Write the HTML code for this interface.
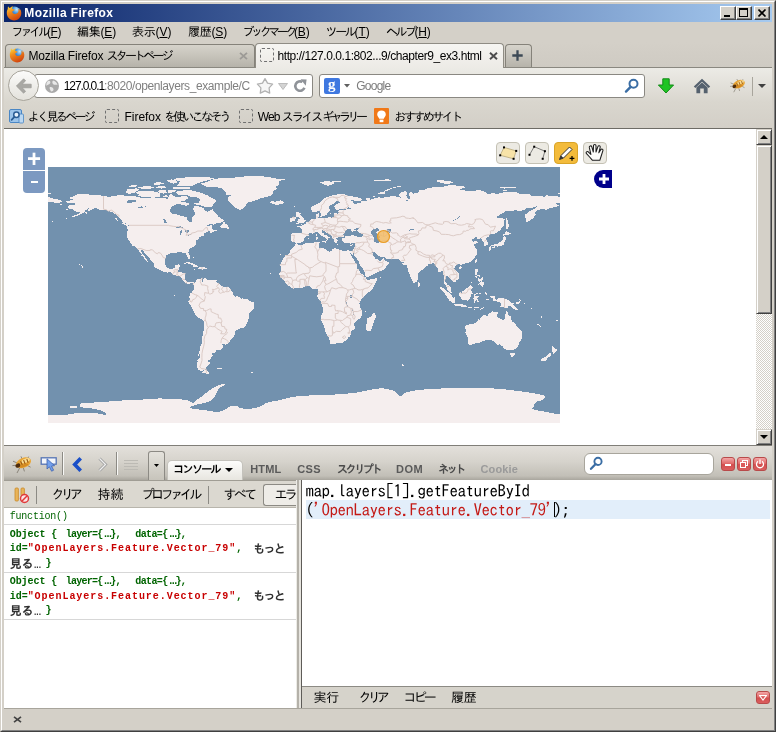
<!DOCTYPE html>
<html lang="ja">
<head>
<meta charset="utf-8">
<title>Mozilla Firefox</title>
<style>
html,body{margin:0;padding:0;}
body{width:776px;height:732px;overflow:hidden;background:#d4d0c8;position:relative;
  font-family:"Liberation Sans","IPAGothic",sans-serif;font-size:12px;color:#000;}
.abs,.t{position:absolute;}
.t{white-space:nowrap;line-height:14px;font-size:12px;}
body{will-change:transform;}
.jp{font-family:"Liberation Sans","IPAGothic",sans-serif;}
u{text-decoration:underline;}
/* window frame */
#frame{left:0;top:0;width:776px;height:732px;box-sizing:border-box;
  border-left:1px solid #d4d0c8;border-top:1px solid #d4d0c8;border-right:1px solid #404040;border-bottom:1px solid #404040;}
#frame2{left:1px;top:1px;width:774px;height:730px;box-sizing:border-box;
  border-left:1px solid #fff;border-top:1px solid #fff;border-right:1px solid #808080;border-bottom:1px solid #808080;}
#title{left:4px;top:4px;width:768px;height:18px;background:linear-gradient(to right,#0a246a 0%,#a6caf0 100%);}
#title .t{left:20.3px;top:2px;color:#fff;font-weight:bold;font-size:12px;}
.wbtn{position:absolute;top:2px;width:16px;height:14px;box-sizing:border-box;background:#d4d0c8;
  border-left:1px solid #fff;border-top:1px solid #fff;border-right:1px solid #404040;border-bottom:1px solid #404040;}
.wbtn:after{content:"";position:absolute;left:0;top:0;right:0;bottom:0;border-right:1px solid #808080;border-bottom:1px solid #808080;}
/* menu */
#menu{left:4px;top:22px;width:768px;height:20px;background:#d4d0c8;}
/* tab bar */
#tabbar{left:4px;top:42px;width:768px;height:26px;background:linear-gradient(#d4d0c8,#cfcbc3);border-bottom:1px solid #8a8880;box-sizing:border-box;}
.tab{position:absolute;box-sizing:border-box;border:1px solid #98958c;border-bottom:none;border-radius:4px 4px 0 0;}
/* nav */
#nav{left:4px;top:68px;width:768px;height:34px;background:linear-gradient(#ecebe6,#d9d6ce);}
#bm{left:4px;top:102px;width:768px;height:26px;background:linear-gradient(#d9d6ce,#d3cfc7);}
.field{position:absolute;box-sizing:border-box;background:#fff;border:1px solid #8a8882;border-radius:3px;}
.dash{position:absolute;width:14px;height:14px;box-sizing:border-box;border:1px dashed #707070;border-radius:2px;}
/* content */
#content{left:4px;top:128px;width:768px;height:317px;background:#fff;box-sizing:border-box;border-top:1px solid #6e6c66;}
.sbtn{position:absolute;width:16px;height:16px;box-sizing:border-box;background:#d4d0c8;
  border-left:1px solid #d4d0c8;border-top:1px solid #d4d0c8;border-right:1px solid #404040;border-bottom:1px solid #404040;box-shadow:inset 1px 1px 0 #fff,inset -1px -1px 0 #808080;}
.olbtn{position:absolute;top:142px;width:24px;height:22px;box-sizing:border-box;border:1px solid #c4c1b4;border-radius:4px;background:#eceae3;}
/* firebug */
#fbtool{left:4px;top:445px;width:768px;height:35px;box-sizing:border-box;border-top:1px solid #807e78;
  background:linear-gradient(#e3e0db 0%,#d6d3cc 45%,#c2bfb7 88%,#a9a69e 100%);}
#fbsub{left:4px;top:480px;width:292px;height:28px;background:#dbd8d0;box-sizing:border-box;border-top:1px solid #a09d94;border-bottom:1px solid #b8b5ac;}
#fblog{left:4px;top:508px;width:292px;height:200px;background:#fff;}
#split{left:296px;top:480px;width:6px;height:228px;background:linear-gradient(to right,#ecebe6 0 1px,#b4b1a9 1px 3px,#e6e4de 3px 5px,#5e5c58 5px 6px);}
#cmd{left:302px;top:480px;width:470px;height:206px;background:#fff;}
#cmdbar{left:302px;top:686px;width:470px;height:22px;background:#d6d3cb;box-sizing:border-box;border-top:1px solid #8c8a84;}
#addon{left:4px;top:708px;width:768px;height:20px;background:#d4d0c8;box-sizing:border-box;border-top:1px solid #a8a59c;}
.mono{font-family:"IPAGothic","Liberation Mono",monospace;}
.log{font-family:"Liberation Mono","IPAGothic",monospace;font-size:10px;font-weight:bold;color:#006400;letter-spacing:0.1px;}
.red{color:#c80000;}
.fbtab{font-family:"Liberation Sans","IPAGothic",sans-serif;font-weight:bold;font-size:11px;color:#5a5a5a;}
.rbtn{position:absolute;top:457px;width:14px;height:14px;box-sizing:border-box;border:1px solid #b84a4a;border-radius:3px;background:linear-gradient(#f3a6a6 0%,#e16c6c 45%,#d34e4e 55%,#da5e5e 100%);}
</style>
</head>
<body>
<svg width="0" height="0" style="position:absolute"><defs>
<radialGradient id="fg" cx="0.68" cy="0.25" r="0.75"><stop offset="0" stop-color="#c4e8fb"/><stop offset="0.45" stop-color="#3f92e0"/><stop offset="1" stop-color="#1b3b98"/></radialGradient>
<linearGradient id="ff" x1="0.1" y1="0" x2="0.6" y2="1"><stop offset="0" stop-color="#fdd93a"/><stop offset="0.4" stop-color="#f18d1d"/><stop offset="1" stop-color="#cf430e"/></linearGradient>
<symbol id="fx" viewBox="0 0 16 16"><circle cx="8.6" cy="7.4" r="5.9" fill="url(#fg)"/>
<path d="M2.2 1.2C2.6 2.4 3.2 2.8 4 3C5.2 1.8 6.6 1.4 7.6 1.6C6.4 2.2 6 3 6.2 3.8C7.2 4 8.2 4.2 8.6 5C8 5.8 7 5.8 6.4 6.4C6.2 7.4 7 8.4 8 8.8C9.6 9.4 11.2 8.8 12 7.6C12.8 6.2 12.6 4.6 12 3.4C13 4 13.6 5 13.8 5.8C13.8 4.6 13.6 3.8 13.2 3.2C14.8 4.6 15.6 6.8 15.2 9.2C14.6 12.8 11.8 15.4 8.2 15.4C4.2 15.4 .8 12.2 .8 8C.8 6.4 1.2 5 1.8 4C1.6 3 1.8 2 2.2 1.2Z" fill="url(#ff)"/></symbol>
</defs></svg>
<!-- ===== window frame ===== -->
<div class="abs" id="frame"></div>
<div class="abs" id="frame2"></div>

<!-- ===== title bar ===== -->
<div class="abs" id="title">
  <svg class="abs" style="left:2px;top:1px" width="16" height="16" viewBox="0 0 16 16"><use href="#fx"/></svg>
  <span class="t" style="letter-spacing:0.38px;">Mozilla Firefox</span>
  <div class="wbtn" style="left:716px"><div class="abs" style="left:3px;top:8px;width:6px;height:2px;background:#000"></div></div>
  <div class="wbtn" style="left:732px"><div class="abs" style="left:2px;top:1px;width:9px;height:9px;box-sizing:border-box;border:1px solid #000;border-top:2px solid #000"></div></div>
  <div class="wbtn" style="left:750px">
    <svg class="abs" style="left:3px;top:2px" width="9" height="8" viewBox="0 0 9 8"><path d="M0.5 0.5 L7.5 7.5 M7.5 0.5 L0.5 7.5" stroke="#000" stroke-width="1.6" fill="none"/></svg>
  </div>
</div>

<!-- ===== menu bar ===== -->
<div class="abs" id="menu">
  <span class="t jp" style="left:7.5px;top:3px"><span style="letter-spacing:-3.12px;">ファイル</span><span style="letter-spacing:-0.45px;">(<u>F</u>)</span></span>
  <span class="t jp" style="left:73px;top:3px"><span style="letter-spacing:-0.25px;">編集</span><span style="letter-spacing:-0.17px;">(<u>E</u>)</span></span>
  <span class="t jp" style="left:128px;top:3px"><span style="letter-spacing:-0.25px;">表示</span><span style="letter-spacing:-0.01px;">(<u>V</u>)</span></span>
  <span class="t jp" style="left:184px;top:3px"><span style="letter-spacing:-0.25px;">履歴</span><span style="letter-spacing:-0.17px;">(<u>S</u>)</span></span>
  <span class="t jp" style="left:238.5px;top:3px"><span style="letter-spacing:-3.42px;">ブックマーク</span><span style="letter-spacing:-0.17px;">(<u>B</u>)</span></span>
  <span class="t jp" style="left:321.5px;top:3px"><span style="letter-spacing:-2.33px;">ツール</span><span style="letter-spacing:-0.11px;">(<u>T</u>)</span></span>
  <span class="t jp" style="left:382px;top:3px"><span style="letter-spacing:-2.50px;">ヘルプ</span><span style="letter-spacing:-0.22px;">(<u>H</u>)</span></span>
</div>

<!-- ===== tab bar ===== -->
<div class="abs" id="tabbar">
  <div class="tab" style="left:1px;top:2px;width:250px;height:23px;background:linear-gradient(#d6d3cb,#b6b3aa);border-color:#85827a"></div>
  <div class="tab" style="left:251px;top:1px;width:249px;height:26px;background:linear-gradient(#f6f5f2,#eceae5);border-color:#8f8c84"></div>
  <div class="tab" style="left:501px;top:1.5px;width:27px;height:23.5px;background:linear-gradient(#d6d3cb,#b6b3aa);border-color:#85827a"></div>
  <svg class="abs" style="left:5px;top:5px" width="16" height="16" viewBox="0 0 16 16"><use href="#fx"/></svg>
  <span class="t jp" style="left:24.5px;top:7px"><span style="letter-spacing:-0.17px;">Mozilla Firefox </span><span style="letter-spacing:-2.79px;">スタートページ</span></span>
  <svg class="abs" style="left:235px;top:10px" width="9" height="8" viewBox="0 0 9 8"><path d="M1 0.8L8 7.2M8 0.8L1 7.2" stroke="#9c9a96" stroke-width="1.8" fill="none"/></svg>
  <div class="dash" style="left:256px;top:6px"></div>
  <span class="t jp" style="left:273.5px;top:7px;letter-spacing:-0.43px;">http://127.0.0.1:802...9/chapter9_ex3.html</span>
  <svg class="abs" style="left:485px;top:10px" width="9" height="8" viewBox="0 0 9 8"><path d="M1 0.8L8 7.2M8 0.8L1 7.2" stroke="#4c4c4c" stroke-width="1.9" fill="none"/></svg>
  <svg class="abs" style="left:508px;top:8px" width="11" height="11" viewBox="0 0 11 11"><path d="M5.5 0.3V10.7M0.3 5.5H10.7" stroke="#3c4956" stroke-width="2.3" fill="none"/></svg>
</div>

<!-- ===== nav bar ===== -->
<div class="abs" id="nav">
  <div class="field" style="left:30px;top:6px;width:279px;height:24px;"></div>
  <div class="abs" style="left:4px;top:2px;width:31px;height:31px;box-sizing:border-box;border:1px solid #a8a59c;border-radius:50%;background:linear-gradient(#fbfbfa,#e4e2dc);"></div>
  <svg class="abs" style="left:11px;top:10px" width="18" height="16" viewBox="0 0 18 16"><path d="M8.6 0.8 L1.4 8 L8.6 15.2 L10.6 13.2 L7.2 9.8 H16.2 V6.2 H7.2 L10.6 2.8 Z" fill="#a9a8a4" stroke="#9b9a95" stroke-width="0.7" stroke-linejoin="round"/></svg>
  <svg class="abs" style="left:40px;top:10px" width="16" height="16" viewBox="0 0 16 16"><circle cx="8" cy="8" r="7" fill="#a9a9a9"/><path d="M4 3 C6 2 7 4 6 5.5 C5 7 3 6.5 2.5 8 C2 6 2.5 4 4 3Z M9 2.5 C11 3 13 4.5 13.5 7 C12 6 11 7.5 9.5 6.5 C8 5.5 8 3.5 9 2.5Z M6 9 C8 8.5 10 10 9.5 12 C9 13.5 7 14 6.5 12.5 C6 11 5 10 6 9Z" fill="#e8e8e8"/></svg>
  <span class="t jp" style="left:59.7px;top:11px"><span style="letter-spacing:-1.08px;">127.0.0.1</span><span style="color:#808080;letter-spacing:-0.40px;">:8020/openlayers_example/C</span></span>
  <svg class="abs" style="left:252px;top:9px" width="18" height="18" viewBox="0 0 18 18"><path d="M9.0 1.6 L11.5 6.1 L16.6 7.1 L13.1 10.9 L13.7 16.1 L9.0 13.9 L4.3 16.1 L4.9 10.9 L1.4 7.1 L6.5 6.1 Z" fill="#f6f6f6" stroke="#b2b2b2" stroke-width="1.3" stroke-linejoin="round"/></svg>
  <svg class="abs" style="left:274px;top:15px" width="10" height="7" viewBox="0 0 10 7"><path d="M0.5 0.5 H9.5 L5 6.5 Z" fill="#d4d4d4" stroke="#b0b0b0" stroke-width="0.8"/></svg>
  <svg class="abs" style="left:289px;top:11px" width="14" height="14" viewBox="0 0 14 14"><path d="M11.4 8.8 A4.7 4.7 0 1 1 9.4 3" fill="none" stroke="#8f9399" stroke-width="2.6"/><path d="M7.6 0.2 L13.6 0.6 L12.8 6.8 Z" fill="#8f9399"/></svg>
  <div class="field" style="left:315px;top:6px;width:326px;height:24px;"></div>
  <div class="abs" style="left:320px;top:10px;width:16px;height:16px;background:#3f78e0;border-radius:2px;"></div>
  <span class="t" style="left:324px;top:9px;color:#fff;font-family:'Liberation Serif',serif;font-weight:bold;font-size:15px;line-height:15px">g</span>
  <svg class="abs" style="left:340px;top:16px" width="6" height="3.5" viewBox="0 0 7 4"><path d="M0 0H7L3.5 4Z" fill="#606060"/></svg>
  <span class="t jp" style="left:352.3px;top:11px;color:#7c7c7c;letter-spacing:-0.78px;">Google</span>
  <svg class="abs" style="left:620px;top:10px" width="16" height="16" viewBox="0 0 16 16"><circle cx="9.5" cy="5.8" r="4" fill="#fff" stroke="#3b6ea5" stroke-width="2"/><path d="M6.6 8.8 L2 13.6" stroke="#3b6ea5" stroke-width="2.4" stroke-linecap="round"/></svg>
  <svg class="abs" style="left:653px;top:10px" width="18" height="16" viewBox="0 0 18 16"><path d="M5.8 0.8 H12.2 V7 H16.6 L9 15 L1.4 7 H5.8 Z" fill="#1fc424" stroke="#138a17" stroke-width="1" stroke-linejoin="round"/></svg>
  <svg class="abs" style="left:689px;top:10px" width="18" height="16" viewBox="0 0 18 16"><path d="M9 0.8 L0.8 8.6 L2.4 10 L9 3.8 L15.6 10 L17.2 8.6 Z" fill="#55616e"/><path d="M3.4 9.6 L9 4.6 L14.6 9.6 V15.2 H10.8 V10.4 H7.2 V15.2 H3.4 Z" fill="#55616e"/></svg>
  <svg class="abs" style="left:724.6px;top:10.4px" width="19" height="15" viewBox="0 0 24 19">
  <path d="M2 6.2 L7.6 8.6 M1.4 10.6 L6 10.2 M6 18 L8.6 13 M13.4 16.4 L12.4 13 M19.6 12.2 L16.6 10.6 M10 1.4 L11.4 4.6 M17.6 1.6 L16.4 4.4" stroke="#7a7468" stroke-width="0.8" fill="none"/>
  <ellipse cx="12.5" cy="7.8" rx="7.9" ry="4.9" fill="#e9a636" transform="rotate(-22 12.5 7.8)"/>
  <ellipse cx="14.6" cy="5.6" rx="4.4" ry="2" fill="#f8dc92" transform="rotate(-22 14.6 5.6)"/>
  <ellipse cx="6.9" cy="10.6" rx="2.6" ry="2.1" fill="#4e2c0c" transform="rotate(-22 6.9 10.6)"/>
  <path d="M9.6 6.2 L11.6 10.8 M12.6 5 L14.4 9.6 M15.8 4 L17.2 7.8" stroke="#9a5a16" stroke-width="1.1" fill="none"/>
  <ellipse cx="13" cy="10.6" rx="4.6" ry="1.3" fill="#d48a22" transform="rotate(-22 13 10.6)"/>
</svg>
  <div class="abs" style="left:748px;top:9px;width:1px;height:19px;background:#a8a59c"></div>
  <svg class="abs" style="left:754px;top:16px" width="8" height="4" viewBox="0 0 8 4"><path d="M0 0H8L4 4Z" fill="#404040"/></svg>
</div>

<!-- ===== bookmarks bar ===== -->
<div class="abs" id="bm">
  <svg class="abs" style="left:5px;top:7px" width="15" height="15" viewBox="0 0 15 15"><rect x="0.5" y="0.5" width="12" height="13" rx="1.5" fill="#9cc4ea" stroke="#4a86c4"/><rect x="10" y="5" width="4.5" height="9" rx="1" fill="#bcd8f2" stroke="#4a86c4" stroke-width="0.8"/><circle cx="7.4" cy="5.8" r="2.7" fill="#e8f3fc" stroke="#2b5d94" stroke-width="1.5"/><path d="M5.4 7.8 L2.6 10.8" stroke="#2b5d94" stroke-width="1.8" stroke-linecap="round"/></svg>
  <span class="t jp" style="left:23.7px;top:8px;letter-spacing:-2.64px;">よく見るページ</span>
  <div class="dash" style="left:100.5px;top:7px"></div>
  <span class="t jp" style="left:120.6px;top:8px"><span style="letter-spacing:-0.06px;">Firefox </span><span style="letter-spacing:-2.79px;">を使いこなそう</span></span>
  <div class="dash" style="left:234.5px;top:7px"></div>
  <span class="t jp" style="left:253.8px;top:8px"><span style="letter-spacing:-0.95px;">Web </span><span style="letter-spacing:-2.17px;">スライス </span><span style="letter-spacing:-3.60px;">ギャラリー</span></span>
  <div class="abs" style="left:369.5px;top:6px;width:15px;height:16px;background:#f07818;border-radius:1px;"></div>
  <svg class="abs" style="left:371.5px;top:8px" width="11" height="13" viewBox="0 0 11 13"><path d="M5.5 0.5 C8 0.5 9.8 2.2 9.8 4.4 C9.8 6.2 8.2 7 7.8 8.8 H3.2 C2.8 7 1.2 6.2 1.2 4.4 C1.2 2.2 3 0.5 5.5 0.5Z" fill="#fff"/><rect x="3.6" y="9.6" width="3.8" height="2.6" fill="#fff"/></svg>
  <span class="t jp" style="left:390.2px;top:8px;letter-spacing:-2.50px;">おすすめサイト</span>
</div>

<!-- ===== content ===== -->
<div class="abs" id="content"></div>
<!-- scrollbar -->
<div class="abs" style="left:756px;top:129px;width:16px;height:316px;background:#eae8e3;background-image:repeating-conic-gradient(#d4d0c8 0% 25%,#fff 0% 50%);background-size:2px 2px;"></div>
<div class="sbtn" style="left:756px;top:129px"><svg class="abs" style="left:3px;top:5px" width="8" height="4" viewBox="0 0 8 4"><path d="M0 4H8L4 0Z" fill="#000"/></svg></div>
<div class="sbtn" style="left:756px;top:145px;height:169px"></div>
<div class="sbtn" style="left:756px;top:429px"><svg class="abs" style="left:3px;top:5px" width="8" height="4" viewBox="0 0 8 4"><path d="M0 0H8L4 4Z" fill="#000"/></svg></div>

<!-- zoom control -->
<div class="abs" style="left:23px;top:148px;width:22px;height:22px;background:#7c99c1;border-radius:4px 4px 0 0;"></div>
<div class="abs" style="left:23px;top:171px;width:22px;height:22px;background:#7c99c1;border-radius:0 0 4px 4px;"></div>
<span class="t" style="left:27px;top:146.5px;color:#fff;font-weight:bold;font-size:24px;line-height:24px;font-family:'Liberation Sans',sans-serif">+</span>
<div class="abs" style="left:31px;top:181px;width:7px;height:2px;background:#fff"></div>

<!-- map -->
<svg class="abs" style="left:48px;top:167px" width="512" height="256" viewBox="0 0 512 256">
<rect width="512" height="256" fill="#7291ae"/>
<g shape-rendering="crispEdges">
<path fill="#f5eeee" d="M17.1 34.7L22.8 33.4L25.6 32.7L19.9 30.9L24.2 29.9L28.4 27.7L33.4 26.6L39.8 27.3L45.5 28L52.6 28.4L55.5 29L61.2 29.9L64 29.4L69.7 28.4L74 28L78.2 29.2L83.9 28.7L89.6 29.9L93.9 30.9L99.6 31.4L102.4 31L105.2 30.2L110.9 31.6L116.6 30.6L119.5 32.3L120.2 30.2L122.3 26.3L120.9 25.6L125.2 28.4L128 30.3L130.8 29.9L134.4 29.2L139.4 29.2L140.1 31.3L136.5 33.7L132.3 34.8L132.3 37L128 37.3L124.4 39.1L122.3 42L121.6 44.4L124.4 46.9L129.4 47.6L135.1 49.4L139 49.8L139.4 52.6L141.5 55L143.6 54.8L143.6 50.5L146.5 48.4L147.2 45.5L145.1 42.7L145.8 39.1L150.8 39.3L155 40.8L156.4 42.7L157.2 43.7L160 44.7L162.1 43.7L163.6 42.7L164.3 42.1L167.8 46.2L170.7 49.8L174.9 52.6L176.4 54L172.1 56.2L166.4 56.6L161.4 56.9L157.9 59.7L155 61.4L159.3 59L163.6 58.3L164.3 59.7L163.6 61.9L165 62.6L169.2 63.3L170.7 61.9L169.2 63.6L165 65L162.1 66.1L162.1 64.7L163.6 63.3L160.7 64L157.9 65.4L155.7 66.4L155.4 68.3L156.4 68.7L153.6 69.4L150.8 70.3L150.5 71.8L148.6 73.2L147.9 75.4L148.3 77.5L145.8 79.4L142.9 81.1L140.8 83.2L140.4 85.3L141.8 88.9L141.9 91.7L140.8 92.2L139.4 90.3L138.4 88.2L137.2 85.6L135.1 85.8L132.3 84.8L129.4 84.9L128.7 86.5L126.6 86.3L123 85.8L120.9 86.8L118 88.5L117.6 91L117 93.9L116.9 96.3L118.8 100.3L120.9 101.5L122.3 102L125.2 101.4L127 100.3L127.6 98.1L130.8 97.4L132.3 97.7L131.6 100.3L130.8 101.7L130.1 103.8L130.1 105.2L133.7 105.5L136.5 105.7L137.5 106.7L137.2 109.5L137 112.4L138 113.8L139.4 115.2L140.8 115.5L142.6 114.5L145.1 114.8L146.1 115.9L145.4 117.6L144.4 115.9L142.9 115.5L141.8 117.6L140.1 117L138 116.2L137 115.2L135.1 113.8L134 113.1L133.7 111.6L131.6 109.5L130.1 109.2L128 108.5L125.9 108.1L123.7 106L121.6 105L119.5 105.7L116.6 105L113.8 103.8L110.9 102.4L108.1 101L106 99.3L106.2 97.1L105.2 95.3L102.4 92.4L100.3 90.3L98.8 88.5L96.7 86.8L95.3 83.6L92.9 82.9L92.9 84.6L94.6 87L96.7 89.6L98.1 91.7L99.6 93.9L100.3 95.3L98.8 94.6L96.7 92.4L95.3 89.9L93.2 88.5L93.9 87.5L91.7 85.3L90.3 83.2L89.3 81.6L87.5 79.6L84.6 78.9L82.8 76.1L81.8 74.2L79.9 71.8L79.2 70.4L79.4 66.8L79.6 62.6L78.6 59.3L81.1 59L81.8 60.4L81.1 58.3L78.2 56.9L74.7 55.5L74 53.3L71.1 50.5L69.7 49.1L66.8 46.9L64 44.8L61.2 44.4L57.6 43L54 42.7L51.2 42.7L48.4 41.2L45.5 41.5L42.7 43.4L39.8 44.1L40.5 41.5L42.7 41L39.8 41.5L37 43.7L37 45.1L34.1 46.5L30.6 48.4L27 49.4L24.2 50.1L22 50.5L25.6 48.6L28.4 47.6L31.3 46.2L32 44.5L28.4 44.5L25.6 44.1L25.6 42.7L22 42L19.9 40.2L21.3 38.4L24.2 38.1L27 37.4L27 36L24.2 36.3L19.9 36.3ZM152.2 16.8L159.3 14.9L163.6 12.8L170.7 11.4L184.9 10.7L199.1 9.2L213.3 9.2L224.7 10.7L230.4 12.1L238.9 12.1L230.4 14.2L231.8 17.1L227.6 19.9L229 22L224.7 24.2L224.7 27L223.3 28.4L219 29.9L213.3 31L209.1 32.7L204.8 34.4L199.1 35.6L197.7 38.4L194.8 42L192 42.7L187.7 41.2L184.9 38.4L182 35.6L179.9 32.7L180.6 29.9L183.5 28.4L178.5 27.7L177.8 24.9L173.5 21.3L167.8 19.9L160.7 19.9L156.4 19.2L155 17.8ZM163.6 40.4L165 37.7L168.5 33.4L165 31.3L159.3 28.4L155 26.3L147.9 24.5L142.2 23.2L135.1 23.5L129.4 23.5L128 25.6L130.1 27.7L135.1 28.4L139.4 28.4L143.6 29.9L147.9 29.9L150.8 31.3L152.2 33L150.8 35.6L145.1 35.8L146.5 37.3L152.2 38.1L156.4 39.5L160.7 40.1ZM112.4 29.9L106.7 30.6L99.6 30.4L92.4 29.4L89.6 28.4L92.4 27L87.5 26.3L88.2 24.9L92.4 23.8L99.6 24.2L103.8 23.8L106.7 24.9L110.9 25.6L112.4 27.7ZM77.5 25.6L81.1 26.7L85.3 26.3L88.9 24.2L91.7 22.8L88.2 21.3L83.9 22L79.6 22.3ZM142.2 19.5L147.9 17.1L153.6 14.9L162.1 12.8L167.8 11L156.4 10L142.2 10L128 11.4L125.2 12.8L132.3 14.2L130.8 16.6L128 19.2L135.1 19.2ZM119.5 13.5L123.7 12.4L128 13.5L129.4 15.6L125.2 16.6L119.5 14.9ZM142.2 21.3L142.2 20.3L139.4 19.9L128 19.5L125.2 20.6L125.2 21.8L135.1 22L142.2 21.8ZM89.6 20.9L93.9 21.6L101 21.6L106 21.3L105.2 19.9L101 19.1L95.3 19.5L89.6 19.9ZM108.1 21L113.8 21.6L118 20.6L116.6 19.2L110.9 19.2L108.1 19.9ZM110.9 25.6L115.2 26.6L118.8 25.6L118 23.5L113.8 22.8L110.2 23.9ZM120.2 25.6L123.7 25.6L127.3 24.6L128 22.8L122.3 22.5L119.5 23.5ZM132.3 35.1L136.5 34.8L140.8 36.6L141.5 37.7L138 38.7L134.4 38L132.3 37ZM114.5 29.9L118 30.6L120.2 29.6L118.8 28.4L115.2 28.7ZM81.1 19.6L85.3 20.2L90.3 19.1L88.2 17.8L83.9 18.2ZM106.7 17.8L113.8 17.4L116.6 16.4L112.4 15.2L106.7 15.6L105.2 16.8ZM171.7 60.2L176.4 61.4L180.6 61.6L181 60.3L179.9 59L179.2 57.6L176.6 56.9L177.1 54.8L175.2 55.5L174.2 57.6L172.4 59ZM73.5 55.9L76.8 58L80.4 59.3L80.4 58.3L78.2 56.6L75.4 55.6ZM66.8 51.2L68.7 51.2L69.7 53.6L68 52.9ZM36.3 46.2L39.1 46.6L39.4 45.5L37.7 45.2ZM135.1 97L138 95.3L140.8 95L143.6 96L146.5 97.4L149.3 98.6L150.5 99.3L148.6 99.7L145.5 99.8L145.1 98.6L142.2 97.1L139.4 96.3L137.2 96.6ZM150 101.8L152.2 99.7L154 99.8L156.4 100L158.7 101.5L157.9 102L155.7 102.1L154 102.8L152.9 102.1ZM144.6 101.8L147.5 102.1L147.2 102.7L144.8 102.4ZM160.4 101.7L162.7 101.8L162.4 102.5L160.4 102.4ZM144.6 89.9L146.2 90.3L146.1 91.2L144.8 90.5ZM168.1 112.6L169.4 112.6L169.2 113.6L168.1 113.6ZM146.1 115.9L147.9 114.8L148.6 112.9L149.6 112.4L152.2 111.9L154 110.4L154.6 111.4L153.6 112.4L154.2 114.5L155 112.6L156.4 111.6L156.7 110.6L158.6 111.9L159.3 112.9L162.1 112.9L164.3 113.5L166.4 112.8L167.8 112.9L168.1 114.1L169.5 115.6L171 116.3L172.8 118.2L174.6 119.5L177.1 119.6L179.2 119.8L181.3 120.9L182.8 121.7L183.5 123.7L184.9 125.6L184.6 127.6L186.3 128.3L187.3 129.7L189.2 129L192 130.1L193 131.6L194.8 131.4L197 132.1L199.1 132L201.2 133.3L203.1 134.8L205.5 135.4L206.2 137.2L206.5 139.4L205.8 141.5L204.1 143.1L202.7 144.8L201.2 146.5L200.5 148.6L200.5 151.5L200.2 153.6L199.1 156.2L198 158.6L196.6 160.4L194.1 160.7L192 161.7L189.9 162.4L187.7 164L186.9 166.1L186.7 168.2L184.9 170.4L182.8 172.8L181.3 174.9L179.9 176.6L177.8 177.6L174.9 177.1L172.9 176.4L174.6 178.2L175.2 180.1L173.9 182L171.4 183.2L167.8 183.5L167.4 185.6L163.8 186L163.6 187.7L165.3 188.4L163.6 189.6L162.8 192L160.3 193.1L160 194.6L162.1 195.6L161.4 197L159.3 199.1L157.9 200.5L158.7 202.4L157.2 202.4L155 203.4L155 204.5L152.9 204.1L150.8 203.1L149.3 201.2L148.9 199.1L148.6 196.3L150 194.6L148.6 194.1L150 192L151.5 190.6L152.2 187.7L151 186.3L151.5 184.2L151.5 181.3L152.6 179.2L153.6 176.4L154.3 173.5L154.3 170.7L154.6 167.8L155.4 165L155.7 162.1L156.2 159.3L156.2 156.4L156 154L154.3 152.6L152.2 151.5L149.3 150L147.5 147.9L147.2 146.5L146.1 145.1L144.8 142.2L143.6 139.8L142.5 138L140.8 136.5L140.4 134.4L141.8 132.8L142.2 131.6L140.8 131.1L141.1 129.4L142.2 128L142.2 126.6L143.9 125.7L144.4 124.3L145.8 123L145.8 120.9L146.1 118.8L145.4 117.6ZM155.7 203L158.4 203L159.3 204.1L161.4 205.5L163.3 205.9L161.4 206.5L157.9 206.6L154.3 205.5L153.6 204.5L155.3 204.5ZM169.2 201L172.1 201L173.8 201.5L172.1 202.4L169.2 202ZM247.6 77.1L251.7 77.8L254.6 78.1L257.4 76.2L260.3 75.5L263.1 75.8L267.4 75.4L270.2 75L271.6 75.5L270.9 77.5L271.4 78.9L270.5 79.9L271.9 80.8L274.5 81.2L277.6 82.1L278.8 83.5L281.6 84.6L284.2 84.3L284.4 82.5L286.6 81.2L288.7 81.6L291.6 82.8L294.4 83.5L297.2 84.1L300.1 83.2L301.9 83.6L303.6 83.8L304.8 83.5L305.6 86L304.9 88.2L303.8 87.9L302.4 85.5L301.9 85.9L303.6 88.9L305.1 91.7L306.5 93.9L306.8 95.6L308.6 97.4L309 99.6L309.3 101.7L310.9 102.4L312.2 106L314.3 107.1L316.4 109.5L317.6 110.2L317.6 111.6L319.3 113.2L322.1 112.6L325 111.9L328.8 111.1L328.8 113.1L327.5 115.9L326.4 118L325 120.9L322.8 123.7L320 125.9L317.2 128L315 130.6L313.6 131.8L312.2 134.4L311.3 136.5L312.2 138.7L312.2 140.8L313.6 142.9L313.6 145.8L313.9 148.6L312.9 150.8L310 152.6L307.9 154.7L305.8 156.4L306.5 159.3L306.5 162.1L302.9 164.3L302.8 166.4L302.2 169L300.1 170.7L298.7 172.8L296.2 174.6L294.4 175.9L292.3 176.4L289.4 176.4L287.3 176.6L284.4 177.5L282.3 176.6L282 174.6L281.3 172.1L279.9 169.2L278.5 167.1L277.3 164.3L276.6 161.4L276.3 159.3L274.9 156.9L273.4 154.3L272.8 152.2L273.1 149.3L274.5 146.5L275.5 143.6L274.9 141.2L274.2 138.7L273.4 136.5L273.4 135.1L272.4 133.7L270.2 131.6L269.1 129.4L269.5 127.6L269.8 125.2L269.9 123L268.8 121.6L266.7 121.7L264.8 121.9L263.1 120.2L261 118.9L258.1 119.3L256 120L253.2 121.3L251 120.7L248.2 120.7L245.3 121.7L243.2 120.6L240.8 119L239.2 117.8L237.5 115.9L236.8 114.2L235.1 112.8L234.2 111.6L232.2 110.2L232.1 108.8L231.1 107.1L232.4 105.2L232.8 103.1L233.1 100.6L231.8 98.1L232.8 96L234 93.9L235.4 91L237.5 88.5L240.4 87.2L242.1 85.6L242.3 83.9L243.2 81.8L245.3 80.2L246.8 78.9ZM326.1 145.1L327.5 147.9L327.8 150.5L326.4 152.9L325.4 156.4L324 160.7L322.8 163.6L320.7 164.3L318.6 163.6L317.6 160.7L317.9 158.6L319 156.4L318.6 153.6L319.3 151.2L321.4 150.3L323.6 148.9L325 146.5ZM331.8 109.9L333.5 110.1L333.2 110.5L331.9 110.5ZM232 87.6L233.1 87.3L232.5 88.2ZM235.4 87.2L236.4 87L235.8 88ZM317.4 144.2L317.9 144.2L317.9 144.9L317.4 144.9ZM334.5 157.7L335.4 157.7L335.4 158.4L334.5 158.4ZM337.5 156.4L338.2 156.4L338.2 157.2L337.5 157.2ZM243.2 66.8L244.6 65.8L248.2 66L251 66.3L253.4 66.3L254.3 64.4L254.3 62.6L252.9 60.9L249.6 59.9L249.3 59L251.7 58.6L253.7 58.7L253.4 57.3L254.3 57.7L256.3 57.6L258.1 56.6L258.4 55.5L261 54.9L262.1 53.8L262.8 52.6L264.5 52.1L266.2 51.9L268.1 51.6L268.5 50.8L268.2 49.1L267.7 47.2L269.5 46.6L270.9 45.9L270.8 47.6L271.4 48.4L270.2 49.4L269.8 50.1L271.4 51.2L273.1 50.9L275.2 50.6L276.3 51.3L278.8 50.8L281.6 50.1L283.7 50.6L284.4 49.9L285.9 49.4L285.9 47.2L286.6 46.2L288 45.9L290.1 46.8L290.7 45.1L289.4 43.8L292.3 43.2L295.8 43.4L298.7 42.7L296.5 41.8L293 42.1L288.7 42.8L287.3 42L286.3 40.1L286.6 38.4L288.7 37L291.6 35.6L290.4 34.4L287.7 34.4L286.3 36.3L283 38L280.9 39.4L280.5 41.2L280.6 42.2L282.7 42.7L281.6 44.1L279.5 45.8L278.8 47.9L276.6 48.4L276.2 49.2L274.5 49.2L273.9 48.1L272.1 45.5L271.6 44.1L270.9 43.4L269.5 44.1L267.4 45.4L265.2 45.4L263.8 44.1L263.1 42L263.1 39.8L265.2 38.7L268.1 37.7L270.9 36.3L273.1 34.8L274.5 32.7L277.3 30.9L280.9 29.4L284.4 28.3L288.7 27.6L292.6 26.9L295.8 27.2L300.1 28L298.7 28.9L302.9 29.3L307.2 29.7L312.9 31.6L314.3 33L312.2 34L307.2 33.7L303.6 33.1L302.2 33.7L305.5 34.8L305.4 36.3L308.6 37L309.3 35.8L312.9 36L313.3 34.4L315.7 33.6L318.6 33.7L317.9 31.6L319 30.6L322.1 31.3L321.7 32.9L324.3 31.9L327.1 31L331.4 30.2L333.5 30.9L338.5 30.2L341.3 30.4L342.8 29L347 29.4L349.9 29.9L353.4 30.9L351.3 29.2L351 27L353.4 24.9L357.7 24.2L359.5 25.9L358.4 28.4L359.4 30.6L361 32.3L357.7 33.7L359.8 33.8L362 31.6L362.4 29.9L360.7 28L361.7 25.6L363.4 25.2L365.5 26.7L368.4 25.9L370.5 25.2L370.8 23.5L375.5 23L379.7 21.9L379 20.9L384 20.5L389 19.9L394 19.9L398.2 19.2L401.1 17.8L404.3 17.5L406.8 18.1L409.6 18.9L415.3 19.2L417.4 20.2L412.4 22L412.4 23L417.4 23.5L424.5 23.9L430.9 23.2L433.8 23.6L436.6 24.6L440.2 27L443.7 26.3L446.6 26.5L450.8 26.5L454.4 26.3L455.1 24.9L459.4 24.6L463.6 25.2L468.6 25.3L470.8 26.5L473.6 27.2L478.6 27L482.8 27.6L483.6 28.9L487.8 28.9L493.5 29L496.4 30.2L498.5 28.4L502 28.7L506.3 28.7L509.9 29.4L512 30L512 35.4L510.6 35.8L508.4 36L508.4 36.7L510.6 38.4L510.3 39.3L506.3 40.1L502 41.2L498.5 42.7L493.5 42.2L490 42.8L488.2 44.1L487.1 45.8L488.1 47.6L486.4 49.1L486.1 50.3L483.6 52.3L481.4 53.8L478.9 55.5L477.9 53.3L477.3 50.5L477.3 47.6L479.3 45.8L482.1 44.1L485.7 42.1L488.5 40.1L489.2 39.1L485 40.2L483.3 41.5L479.3 40.5L475.7 43.2L472.2 44.1L467.9 43.4L462.9 43.7L458.7 43.8L455.1 45.9L451.6 47.9L448.4 50.1L451.6 51.3L454.4 50.9L456.8 52.3L455.8 54.8L455.5 56.9L455.7 59.3L453.7 61.2L452.3 63.1L449.4 64.9L447 66.6L444 66.6L442.3 67.4L440.9 68.3L440.5 69.8L438.5 71.1L437.3 71.8L438.8 73.2L440 75.4L440 77.4L438.8 78.2L436.6 78.8L435.6 78.2L436.1 76.1L435.5 74.5L433.8 74.1L434.2 72.1L432.8 71.3L430.2 71.8L428.5 72.7L429.2 70.3L428.1 70L426 71.4L423.8 72.2L423.4 73.4L425.2 74.8L427.8 74.2L430.2 75L429.5 75.7L427.1 76.8L425.7 78.2L427.1 79.6L427.8 81.5L429.2 83.1L429.4 84.2L427.4 84.9L429.2 85.5L428.9 87.8L427.4 89.3L426.1 91.4L424.7 93L422.8 94.4L421 95.4L418.6 96.1L417.1 96.4L415 97.3L413.2 97.7L412.9 99.1L412.2 97.6L410.3 97.1L408.2 98.1L406.8 99.8L406.3 101.3L407.6 103.1L409.3 104.8L410.7 106.4L411.4 108.8L411.3 111.2L409.6 112.5L408.2 113.2L407.6 114.5L405.3 115.6L405 113.8L403.2 112.9L401.8 110.9L400.1 109.9L399.5 108.8L398.2 108.9L398.1 110.9L397.2 113.1L397.2 114.8L398.6 116.2L399.1 117.8L400.8 118.5L402.5 120L403.2 121.6L403.2 124L404.2 125.9L403.2 126.2L401.8 125.2L400.1 123.9L398.8 122L398.6 119.8L397.8 118.3L396.1 116.3L395.8 114.5L396.4 112.4L396.2 110.2L395.7 108.1L395 106L395 104.5L393.7 103.8L391.8 105.5L390.1 105.2L390.4 103.1L389.7 101L388 99.3L386.8 97.3L386.1 95.9L384.7 96.1L383.3 97L381.4 97L379.7 97.7L379.4 99.1L377.3 100L375.5 101.7L373 103.8L371.2 105L370.1 106L369.9 108.1L370.2 109.8L369.5 111.6L369.5 113.4L368.4 114.8L367.2 115.3L366.2 116.5L365.2 115.5L364.4 113.8L363.4 111.4L362.4 109.5L361.8 107.1L360.7 105.2L359.8 102.7L359.5 100.6L359.4 98.1L358.8 97.4L357 98.4L355.6 98.1L354.1 96.3L356 95.4L353.8 94.9L352 93.9L351.3 92.7L350.6 91.9L347.7 92.2L344.9 92.2L343.5 92.3L340.6 91.9L337.8 91.4L336.8 89.6L334.2 90L332.1 89.9L330 88.5L328.5 87L327.1 85L325.5 84.9L324.3 85.6L325 87.5L325.7 88.9L327.1 90.2L327.4 91.6L328.2 92.7L329 91L329.4 92.4L330.7 93.6L332.8 93.7L334.9 92L336.1 90.7L336.4 93.2L337.8 94.2L339.6 94.6L341 96L339.9 98.1L338.5 99L338.1 101L336.4 102.4L334.5 103.1L332.8 103.8L330 105.2L327.1 106.7L324.3 108.1L320.7 109.5L318.6 110.1L317.6 109.1L316.9 107L316.7 104.8L315.4 102.7L314.3 100.6L312.5 98.8L311.5 96.7L310.5 94.3L309 92.4L307.9 90.3L306.2 88.2L305.6 86L304.8 83.5L305.8 81.8L306.5 79.6L307.2 77.1L307.3 75.9L305.2 75.7L302.6 76.7L300.1 75.7L298 76.4L295.8 75.8L294.8 74.7L293.7 73.2L294.4 71.8L293.3 71.1L295.1 70.5L297.2 70.5L297.4 69.4L300.4 69.5L303.4 68.3L306.1 68.3L307.9 69.3L310.8 69.7L313.6 69.7L315.2 68.8L315 67.6L312.6 66.1L310.3 64.9L309.2 63.6L310.3 62.6L311.8 60.9L309.3 61.2L306.2 62L305.8 63L307.9 63.6L306.5 64.1L304.1 64.9L302.4 63.4L303.6 62.4L301.2 61.7L299.8 61.9L298.4 63.3L297 64.6L296.7 66.1L295.4 67.4L296 68.8L297.2 69.4L295.1 69.7L294.1 70.4L293 69.8L290.8 69.8L289.8 70.7L288.6 70.4L288.1 71.8L289 72.5L290.1 73.7L289 74.1L288.7 75.8L288 76.1L286.9 75.5L286.2 74.2L286.3 73.4L284.9 71.8L283.6 70.4L283.7 68.7L282.3 67.6L280.2 66.6L278 65.4L277 63.7L275.6 64.1L275.3 63.1L273.6 63.4L273.5 65L275.2 66L276.2 67.6L278.8 68.4L278.8 69.1L281.6 70.3L282.3 71L280.5 70.5L279.6 71.5L280.3 72.5L279 74L278.3 74L278.8 72.5L277.8 71.1L276.3 70.1L274.5 69.3L272.6 68L270.9 67L270.5 65.6L268.5 64.9L266.7 65.7L265.2 66.7L263.1 66.3L261.7 66.1L260.4 66.8L260.6 68.6L258.8 69.3L257.1 69.7L256 71.4L255.6 72.1L256.3 73L255 74.2L253.4 75.4L252.7 75.7L249.6 75.8L248.3 76.7L247 75.8L246 75.1L243.5 75.4L243.5 73.5L242.5 72.8L243.2 71.1L243.6 69L242.8 66.8ZM247.9 56.7L251 56.5L254.6 55.9L257.8 55.2L257.1 54.6L258.4 53L256.4 52.6L255.9 51.2L254.2 49.8L253.2 48.5L251.4 48.4L253.2 46.2L251 45.9L251.7 44.7L248.9 44.7L247.5 46.2L248.2 47.6L247.5 48.8L248.9 49.8L251 49.9L251.7 51.2L251.7 52.2L249.6 52.3L249.9 53.6L248.6 54.3L251 54.9L249.9 55.5ZM241.8 54.5L244.3 54.5L247.2 53.8L247.5 52.1L248 50.5L246.8 49.5L244.3 49.6L243.9 50.6L241.8 50.9L242.5 52.2L241.8 53.6ZM221.9 34.8L224.7 33.6L226.8 34.7L230.4 33.8L233.2 33.4L235.4 34.4L236.5 35.6L234.7 36.6L230.4 37.7L226.8 37.5L224 37L224.7 35.8L221.9 35.7ZM271.6 14.9L275.9 14.5L280.2 14.2L284.4 14.8L287.3 16.2L283 17.8L280.2 18.9L277.3 18.2L275.2 17.1L272.4 16.1ZM282.3 13.9L288.7 13.5L294.4 14.1L290.1 15.1L284.4 14.6ZM329.2 27L332.1 27.3L335.6 27.4L337.8 26.3L335.6 24.2L339.2 22.3L344.2 20.6L349.9 19.2L353.4 18.6L352.7 19.5L345.6 21L341.3 22.8L337.1 24.5L333.5 25.2L330.7 25.9ZM322.8 13.9L330 13.1L338.5 12.4L347 12.8L341.3 13.8L332.8 14.2L327.1 14.4ZM391.1 15.4L396.8 16.8L403.9 16.4L405.3 14.9L398.2 13.9L392.5 12.8L386.8 13.9ZM450.8 20.9L456.5 21.6L462.2 21L469.3 21.3L466.5 19.9L459.4 19.6L453.7 19.8ZM455.1 23.6L459.4 23.9L458 22.9L455.1 22.9ZM509.9 26.9L512 27.2L512 26.3L510.6 26.3ZM0 27.2L2.8 27L3.3 26.5L0 26.3ZM0 30L2.8 30.9L7.1 32L11.4 32.7L14.2 34.1L11.4 35.8L10 36.6L6.4 35.8L4.3 34.8L2.1 34.7L0 35.4ZM458 50.8L459.4 51.9L459.8 54.8L460.5 56.9L461.5 58.3L459.4 61.2L459.8 62.2L458 62.6L458 59.7L458 56.9L457.5 54L457.7 51.9ZM455.5 69L457.2 67.6L459.8 68.3L462.9 66.4L461.2 65.4L459.1 64.4L457.7 63.4L457.4 65.4L457 66.6L455.5 66.8L455 67.8ZM442.2 79.6L444.4 79.4L446.6 78.8L448.3 78.9L449.1 80.4L450.6 79.2L453 78.8L454.8 78.2L456.4 77.2L456.5 75.4L457.5 73.2L458 71.5L457.1 69.1L455.4 69.7L455.1 71.4L454.4 73.2L453 75L451.3 74.8L450.6 75.7L449.4 76.8L448.7 77.4L445.9 77.5L444.4 77.8L442.7 78.9ZM440.5 80.6L442.3 79.8L443.6 80.8L443 82.5L441.9 83.9L441.2 83.5L441.5 81.8L440.5 81.4ZM444.2 80.4L446.6 79.2L447.6 79.9L446.9 80.6L445.2 81.4L444.4 81.1ZM428.1 92.2L429.5 92.4L428.8 94.6L427.8 96.7L426.8 95.3L427.1 93.4ZM410.6 100.6L412.4 99.4L413.9 100L413 101.5L411.7 102.1L410.6 101.5ZM369.5 114.2L370.5 114.8L372.3 117.3L372.1 118.9L370.5 119.6L369.6 118.8L369.5 116.6ZM427.2 101.7L429.8 101.7L429.9 103.8L429.1 105.5L429.5 107.8L432.4 108.4L432.4 110.1L430.9 109.5L429.5 108.5L427.8 108.4L427.1 107L426.5 104.8L427.2 103.1ZM429.5 118L431.6 115.9L433.8 114.1L435.6 115.2L435.9 117.6L435.2 119L434.3 119.9L432.8 119L432.4 117.5L430.9 117.3L429.7 118.2ZM429.5 111.2L431.2 111.5L432.8 111.6L434.6 110.4L434.8 112.4L433.8 113.5L432.4 113.8L431.2 114.8L430.1 114.1L430.8 112.6L429.5 113.1ZM422.7 116.1L423.8 114.9L426 112.6L426.2 111.8L425.7 112.9L424.2 114.9L423 116.2ZM427.1 108.8L428.8 109.1L428.5 110.5L427.8 110.2ZM411 125.9L412 125.2L413.9 125.7L414.6 124.2L416.7 123.4L418.1 121.6L420.3 120.5L422 118.2L423.4 119L425.2 120.6L423.8 121.9L423.1 123.3L423.8 124.9L425.2 126.6L423.5 127L423.1 129.1L421.7 130.4L421.4 132.7L420.7 133.3L419.1 133.7L417.4 132.7L415.3 132.8L413.2 132.3L412.7 130.4L411.3 129L411 127.3ZM391.5 120L394.7 120.6L396.5 122.3L398.6 124.2L400.4 125.2L402.5 126.9L403.6 128.4L404.6 130.6L406.8 132.3L406.5 136.2L404.6 136.2L403.2 134.8L401.5 133.7L400.1 131.7L398.9 129.8L397.5 128L396.4 125.6L394.7 124L393 122.6L391.5 121.2ZM405.6 137.7L407 136.5L409.6 137.2L413.2 137.2L416 137.8L418.8 139.1L418.6 140.2L416 139.8L412.4 139.4L409.6 139.1L407.2 138.5ZM419 139.7L421.7 139.8L424.5 139.8L425.2 140.4L422.4 140.8L420.3 140.5ZM426.4 139.9L428.8 140.1L430.9 139.8L430.6 140.5L428.1 140.7L426.4 140.5ZM431.6 142.6L433.8 141.1L436.6 139.9L435.9 140.8L433.8 142.2L432.4 142.6ZM425.2 141.5L427.8 142.1L426.7 142.6L425.2 141.9ZM426.4 126.9L428.1 126.3L430.9 126.6L433.8 125.7L433.1 127.3L430.9 127.4L428.1 127.4L427.1 129.1L428.8 129.3L431.4 129.1L429.9 130.6L429.1 131.3L430.2 133L430.9 134.4L430.2 135.5L429.1 134.7L428.1 132.7L427.4 133.7L427.1 135.8L426 135.8L426 133L425.1 131.8L426 129.4L426.4 128ZM437.3 125L438.8 125.9L438.8 127.6L437.9 129.1L437.5 127.3L437.2 126.3ZM438 132.3L440.9 132.3L442 133.1L439.5 132.8L438 132.8ZM435.2 132.6L436.9 132.7L436.3 133.4L435.2 133.1ZM442.3 129.1L444.4 128.6L446.6 129.1L446.9 131.6L448.7 132.7L450.8 130.6L453 130.6L456.5 131.7L459.4 132.8L462.2 134.4L463.6 135.8L465.8 136.5L465.4 137.7L467.2 140.1L469.3 142.2L470 143.1L467.2 142.5L465.1 141.5L462.9 139.4L460.8 139L459.4 140.8L456.5 140.9L454.4 139.5L452.3 139.8L453.4 138L452.3 135.8L449.4 134.5L446.6 133.5L444.9 133.7L445.2 132.3L443.7 132L445.9 131.3L444.2 131.1L442.3 130ZM466.9 136L469.3 135.1L472.2 134L472.6 135.1L470.8 136.5L468.6 137ZM470.3 131.7L472.9 133L473.6 134.5L472.5 133.7L470.5 132.1ZM476 135.8L477.6 137.2L477.2 137.8L475.9 136.5ZM482.8 141.2L484.7 141.9L484.3 142.2L483 141.8ZM489.2 156.7L491.4 157.9L493.5 159.7L492.8 159.9L490.7 158.6L489.2 157.3ZM508.2 152.9L510 152.9L509.9 153.9L508.3 153.9ZM492.9 149.3L493.9 149.6L494.2 151L493.2 150.5ZM417.4 159.3L418.1 158.6L421 157.4L423.8 156.9L426 156.4L428.1 155.7L429.9 153.6L429.8 152.2L431.6 152.6L432.4 151L433.8 150L435.5 148.2L437.3 147.9L438.8 149L440.5 149L440.2 147.2L441.6 145.8L443 145.4L444.7 144.2L445.9 144.8L448 145.4L450.4 145.1L450.6 146.2L449.4 147.2L448.7 149L450.1 150.5L452.3 151.8L454.4 152.9L456.2 152.6L457.2 150L457.5 147.2L457.7 145.8L458.7 143.4L460.1 145.8L460.5 148.3L462.6 149.3L462.9 151.5L463.9 154.3L465.8 155.7L467.9 157.2L468.9 159.7L470.5 161L471.9 162.4L473.6 164.3L473.9 166.4L474.3 168.5L473.9 170.7L473.2 173.5L471.5 175.4L470.8 177.1L469.8 179.2L469.3 181L466.9 181.8L464.4 183.2L462.2 182.5L460.8 182.5L458.7 182.6L456.2 182L454.8 180.6L454.4 178.9L452.6 178.5L452.3 176.8L451.8 174.9L451.6 176.8L450.6 178.2L449.1 177.5L448.3 176.8L446.9 174.9L444.4 173.5L442.3 172.8L439.5 172.9L435.9 173.9L433.1 174.9L431.6 176.2L428.8 176.1L426 176.8L423.8 177.8L421.7 177.8L419.8 176.8L419.6 175.6L420.6 174.2L420.3 172.1L419.6 170L418.4 167.8L417.4 165.4L417.8 163.3L417.3 161.4ZM461.8 185.9L464.4 186.3L466.8 186L466.9 188L465.8 189.4L463.9 190L462.6 188.4ZM501.6 176.9L503.5 178.5L505.6 179.9L506.3 181.3L508.4 181.8L509.7 181.6L509.2 183.5L507.7 184.2L507.4 185.6L505.3 187.2L504.6 186.6L505.2 184.9L503.2 183.9L504.5 182.8L504.3 180.6L502.8 178.5ZM501.6 185.6L503.9 186.7L502 189.2L500.6 190.3L499.5 191.3L498.8 193.3L497.1 194.3L494.9 194.1L492.8 193.4L493.5 192L495.6 190.6L498.2 189.2L499.9 187.4ZM34.1 99.3L35.6 99.7L35.7 100.4L34.6 101L34.1 100.1ZM31 97.3L31.7 97.3L31.7 97.7L31 97.7ZM33.1 98.1L34.1 98.3L34 98.7L33.3 98.6ZM125.9 128.4L126.7 128.4L126.7 129.4L125.9 129.4ZM268.2 67.7L269.4 66.8L269.5 68.3L269.1 69.1L268.4 68.6ZM267.7 69.8L269.1 69.4L269.9 70.4L269.7 72.2L268.7 72.7L267.9 72.1ZM273.8 74L278.2 73.7L277.5 75.8L276.3 75.4L273.9 74.5ZM289.4 77.4L291.6 77.7L293.4 77.8L293.3 78.2L290.8 78.4L289.4 77.9ZM301.9 78.2L302.9 77.8L305.2 77.2L304.4 78.2L302.9 78.8ZM259.4 71.8L260.6 71.3L260.8 71.8L260.3 72.1ZM271.6 48.8L273.8 48.2L273.8 49.5L272.8 49.8L271.9 49.4ZM269.9 49.1L271.2 49.1L271.2 49.6L270.2 49.6ZM281.9 46.8L283 45.7L282.7 46.5L282 46.9ZM287.1 44.8L288.7 44.7L288.3 45.2L287.3 45.4ZM464.8 64.7L467.6 63.3L465.8 63.7ZM472.2 61.2L474.3 59.4L476.4 57.6L477.9 56L476.4 56.9L473.9 59.2ZM324.7 29.6L326.8 29.2L326.4 30.2L325 30.2ZM245.5 39.4L246.8 39.4L246.5 40.1L245.6 40ZM387.8 108.8L388.3 109.1L388.1 111.5L387.6 111.5ZM405.8 130.3L407.2 130.4L407.6 132.1L406.6 131.8ZM353.8 197.4L356 197.7L355.8 198.5L354.1 198.5ZM202 204.8L204.8 205.2L204.8 205.9L202.7 205.4ZM222.2 106.2L222.9 106.2L222.9 106.8L222.2 106.8ZM311.8 136.2L312.2 136.4L312.2 137.1L311.8 137.1ZM17.1 51.9L19.2 51.2L19.5 51.8L17.4 52.3ZM7.8 53.8L10.7 53.6L10.5 54L8 54ZM3.6 54.3L5.3 54.2L5.1 54.6L3.7 54.6ZM11.8 37.5L14.9 38.1L15.9 38L13.5 37.4ZM18.1 42.4L20.3 42.2L20.2 43L18.5 43ZM164.4 57.2L167.8 57.9L167.8 58.2L165 57.7ZM164.6 61.4L167.8 62L167.1 62.6L165 62.2ZM150.8 70.3L153.6 69.5L153.6 70L151 70.4ZM183.9 128.3L186.3 128.4L187 129.8L184.2 130.4ZM150.5 187.4L151.5 187.6L151.3 189.7L150.2 189.4Z"/>
<path fill="#f5eeee" d="M0 248.5L10 248L19.8 247.6L26 246.5L33 246.3L40 245.5L50 246.5L57.5 248L58 246L52 243L44 241.5L36 241L32 239.5L31.5 237L34 236L43 235.7L55 235L66 234L76 233.4L88 233L98 232.3L109 232L112 230.8L116 232L128 232.3L138.6 232.7L142 234.5L145 236L147 234.8L150 232L155 228.5L158 226L161 223.5L165 221L169 218.8L173 217.5L176.6 216.9L177 218L173 220L170 222.8L168.5 226L166.7 229.4L164.5 232L161.7 234.4L156 236L148.5 237.7L144 239L142 240.5L145 242L152 242.6L160 243.6L166 244.6L171.6 244.6L175 243.8L178 242L181 240L184.8 238.6L189 239L192 241L198 242L204 241.5L211 240L215 238L217.8 236L224 234.5L231 233.4L238 231.6L244 230L250 229.2L256 228.7L268 228.2L282.4 227.8L294 227L305.5 226.1L314 224.6L322 222.8L328 221.8L333.6 221.2L339 222L345 223.5L349 226L351.5 229L353.4 229.6L355.5 227L358.3 225.4L364 224L371.5 222.8L386 221.8L401.2 221.2L420 221L440.8 221.2L451 221.8L460.6 222.8L470 224L480.4 225.4L489 226.8L497 228.7L497.5 230.5L493.6 233.4L489 234.6L487 236L486 239L483.7 242L490 243.5L500 245.2L506 246.5L512 247.5L512 256L0 256ZM22 239L29 238.6L29 240.8L22 241Z"/>
<path fill="#7291ae" d="M326.4 61.9L329.2 61.3L331.4 61.9L330.7 63.6L328.5 64.7L327.8 66.1L330.7 67.6L332.1 69.7L331.4 71.8L332.8 74L331.4 75.5L328.5 75.8L326.4 74.7L325.7 72.5L326.4 70.5L324.3 68.3L322.8 66.1L322.8 64.3L325 62.6ZM339.2 61.9L342.8 61.6L343.5 64L341.3 65.8L339.2 65L338.9 63.3ZM125.9 61.3L128.7 60L132.3 59.3L134.8 60.3L135.1 61.3L132.3 61.4L128 61.3ZM131.6 68L132.7 68L133.4 66.1L134.4 63.6L133.3 63.1L131.6 65ZM136.5 62.9L139.7 62.9L141.5 64.1L139.8 66.1L138.8 66.1L137.5 64.6ZM138 68.4L140.8 68.6L143.4 67.3L142.2 67.1L138.7 68ZM142.9 66.3L146.5 66.3L147.3 65.6L145.1 65.6ZM115.9 56.2L118.8 56.2L118 54L115.9 51.5L114.8 52.6L116.2 54ZM78.9 35.6L83.9 35.6L88.2 34.8L88.2 33.1L83.9 32.7L79.6 33.7ZM89.6 41.2L93.9 41.2L98.1 39.1L100.3 38.7L96.7 39.8L93.2 39.4L90.3 40.5ZM301.8 128L304.1 128L304.1 130.3L302.1 131.1L301.5 129.4ZM297.7 133.1L298.5 134.8L299.2 137.2L299.9 139.7L299.1 139.4L298.1 137L297.5 134.5ZM304.5 141.9L305.2 143.4L305.6 145.8L305.9 147.9L305.2 147.6L304.9 145.1L304.4 143.1ZM403.9 54.8L406.8 53.3L410.3 51.2L412.4 48.6L411.7 48.6L408.9 51.5L406 52.9L403.6 54.5ZM360.5 63.7L362.7 61.9L365.5 61.6L368.4 61.9L367.6 62.3L364.1 62.7L362 63.7ZM299 42.4L302.2 42.2L302.9 41.2L300.8 40.2L298.7 41ZM153.9 112.8L155 112.8L155 114.8L153.9 114.9Z"/>
</g>
<path fill="none" stroke="#dccbc6" stroke-width="1" stroke-linejoin="round" d="M55.5 29L55.5 42.2L58.3 42.7L60.4 44.2L63.3 43.1L66.1 44.9L68.6 47.5L71.1 48.4L70.8 49.8M81.1 58.3L120.6 58.3L121.3 58.6L125.2 59.3L128.7 59.7L130.3 59.3L135.8 61.9L138.7 63.6L138.8 66.8L138 68.3L143.6 67.1L143.6 66.1L147.2 65.4L149.8 64L154.3 64L156 62.7L157.6 60.6L159.3 60.7L159.6 62.9L160.7 64M89.5 81.8L92.9 81.5L98.1 83.5L102.1 83.5L102.1 82.8L104.5 82.8L107.4 85.9L109.5 86.8L110.2 85.6L112.4 86L114.5 88.9L115.2 90.5L117.8 91.2M124.9 107.4L125.2 106.5L125.6 105.2L127.3 105.1L126 103.5L126.6 102.7L129.1 102.7L129.1 105.4L130.6 105.7M129.1 102.7L130.4 101.7M127.9 108.4L129 107.5L131.1 108.9M129 107.5L129.1 105.4M131.8 109.5L133.7 108.1L135.4 107L137.7 106.7M134.1 112.2L137 112.5M138.1 116.5L138.5 114.5M145.2 117.8L146.1 115.8M154 100L153.9 102.4M154.6 111.2L152.9 112.4L152.2 114.8L153.2 116.6L153.6 118L156.4 118L160 119.2L159.6 121.6L160.3 124.4L160.7 126.3M160.7 126.3L156.7 125.6L156.7 127.1L156.4 128.3L157.3 129.6L156.4 134M156.4 134L152.9 131.4L150.8 129.4L148.9 128.1M148.9 128.1L147.2 127.7L145.8 127L143.9 126M148.9 128.1L148.6 130.1L146.5 132L144.6 132.8L143.6 135.1L141.9 134.1L141.8 132.8M156.4 134L152.5 135.3L151 138.4L152.5 141.4L155.6 141.5L155.6 143.6L157 143.6M157 143.6L158.3 145.8L157.9 149L157.2 150.8L157.2 152.9L155.9 154M157.2 152.9L158.6 155.7L159 158.6L160.4 160.4M160.4 160.4L158.7 162.8L158.6 166.4L156.7 169.2L156 172.8L156.4 175.6L155.7 179.2L154.7 182.8L154 186.3L153.9 190.6L154 193.4L152.9 197L151.8 199.8L153.2 201.5L156.4 202L158.7 202.4M158.4 203L158.4 206.1M160.4 160.4L161.8 159L164.3 159.7L167 159.6M167 159.6L167.5 157.2L168.1 155.9L171.9 155.4L173.2 156.2M157 143.6L158.6 143.6L161.4 142.1L163.1 141.9L163.1 144.6L165.7 145.9L168.5 147.2L170.2 147.5L170.4 151L172.9 151.2L173.2 152.9L174.1 153.7L173.2 156.2M173.2 156.2L173.8 159.4L176.6 159.7L177.1 162.1L178.8 162.3L178.3 164.4M167 159.6L169.2 161.8L172.5 163.6L174.1 164.3L172.7 166.7L175.6 166.8L176.6 167L178.3 164.4M178.3 164.4L179.5 166L178.1 167.3L176.6 168.2L174.1 171M174.1 171L173.2 173.5L172.9 176.2M174.1 171L176.4 171.8L178.5 172.8L180.1 174.6L180.1 175.9M160.7 126.3L161.7 127L162.8 126.9L165 125.7L164.7 124.4L165.8 124.7L164.3 122.3L166.7 122.7L166.8 122.2L169.2 121.6L169.7 120.6M169.7 120.6L168.7 119.6L169.1 118.5L170.2 118L170.7 115.9M169.7 120.6L170.7 120.9L171 121.7L171.4 122.5L170.7 124.2L171.1 125.4L172.4 126.3L173.5 125.9L174.9 125.2L175.6 125.3M174.6 119.5L174.5 120.6L173.5 122.3L174.5 123.3L175.6 125.3M175.6 125.3L176.5 125.2L177.8 124.4L178.5 124.7M179.2 119.8L178.6 120.9L179.2 122.9L178.5 124.7M178.5 124.7L179.9 124.7L181.2 124.4L182.6 122M252.9 78.1L253.6 80.4L254.3 82.2L250.9 83.1L248.2 85.5L243.6 87.2L243.6 89.2M237.2 88.6L243.6 88.6M243.6 89.2L243.6 91L238.9 91L238.9 94.6L237.5 95.3L237.5 97.7L231.8 97.7M243.6 89.2L249.2 92.4L257.7 98L257.7 98.6L260.6 100L260.7 101L262 100.8M249.2 92.4L246.8 92.4L248 104.5L248.5 106L242.8 106L240.8 106.1L239.6 105.8L238.6 107M238.6 107L236.8 105.1L235.4 104.4L232.5 105.1M238.6 107L239.8 110.4M239.8 110.4L236.5 110.1L234 110.1L232.2 110.4M232.1 108.7L234.7 108.4L236.4 108.9L234.4 109.4L232.1 109.4M236.5 110.1L236.5 111.4L234.7 112.4M239.8 110.4L243.2 110.5L244.2 112.4L244.6 113.5M237.1 115.2L239.6 113.8L240.8 115.2L241.4 115.9M241.4 115.9L242.8 117.3L243.9 117.2M241.4 115.9L239.6 118.2M243.9 117.2L245.3 119.8L245.3 121.7M243.9 117.2L244.6 113.5M244.6 113.5L247.2 112.9L248.2 113.2M248.2 113.2L249.6 114.2L252 114.2M252 114.2L252 116.9L251.4 118.8L251.6 120.7M248.2 113.2L248.6 111.2L250 109.2L252 108.1L255 106.7L256.3 106.7M252 114.2L251.9 112.4L256 112.2M256 112.2L256.7 114.5L256.9 117.3L257.7 119.3M257.3 112.4L258.3 115.2L258.3 119.2M256 112.2L257.3 112.4L259.3 110.6M261.1 111.4L260.3 115.2L259.8 118.9M259.3 110.6L261.1 111.4M256.3 106.7L257.4 108.9L259.3 110.6M256.3 106.7L261 106.1L262 104.5L262 100.8M262 100.8L264.5 100.3L266.7 98.4L273.1 94.6M261.1 111.4L261.7 108.8L266 109.5L268.8 109.8L273.1 109.2L275.3 108.5M273.1 94.6L276.2 95.9L277.3 95.3L278 98.1L278 104.1L275.2 107.4L275.3 108.5M273.1 94.6L270.2 93.2L269.5 90.3L269.9 87.5L269.5 85M269.5 85L268.8 82.5L266.7 79.9L267.8 78.2L268.2 75.5M269.5 85L270.6 82.9L272.4 80.8M277.3 95.3L290.1 100.3M291.6 83.1L291.6 96.7M291.6 96.7L291.6 99.6L290.1 99.6L290.1 100.3M291.6 96.7L308.5 96.7M290.1 100.3L290.1 105.7L288.6 106L288 108.1L287.3 109.9L288.6 112.4M288.6 112.4L286.9 112.9L283 115.2L279.8 117L278 117.3M278 117.3L275.9 113.8L278 113.8L276.8 109.9L276.2 109.5L275.3 108.5M276.2 109.5L274.8 113.8L273.1 116.6L271.6 118.6L269.5 118.9L268.2 121.3M278 117.3L276.6 119.5L277.3 122.3L279 124.9M279 124.9L274.9 124.9L272.1 124.9L269.9 124.7M272.1 124.9L272.1 126.6L269.9 126.6M274.9 124.9L276.5 126.2L275.9 128.7L276.6 130.6L276.5 131.3L273.8 131.3L272.5 132L272.8 133.1L271.8 133.5M279 124.9L282.5 123M282.5 123L281.3 127.3L279.5 130.8L278.6 133.5L276.5 135L275.1 134.8L274.5 134.5L273.4 136.2M282.5 123L283.7 120.7L288 122L290.8 120.7L295 120.7M288.6 112.4L289.4 115.6L292 117.3L295 120.7M295 120.7L298 121.6L299.8 123L301.5 122.9L304.2 122L307.1 121.5M307.1 121.5L305.1 118L302.9 116.6L304.5 114.5L305.1 112.6L306.1 110.5L307.5 109.5L307.9 107.7M307.9 107.7L308.6 103.8L310.9 102.4M307.9 107.7L310 107.1L312.9 107.5L316.3 110.2M316.3 110.2L315.4 112.4L317.2 112.4L317.4 111.6M317.2 112.4L317.2 114.5L320 115.6L322.8 116.6L324.3 116.6L320 120.9L317.9 121.2L315.7 122M315.7 122L314.3 122.5L312.2 123L310 122.9L308.6 121.9L307.1 121.5M315.7 122L314.3 124L314.3 129.1L315.2 130.4M304.2 122L305.1 123L305.8 125.4L304.4 127.7L304.2 129.4M304.2 129.4L309.5 132.3L309.6 133L311.8 134.7M299.8 123L300.1 124.9L298.5 126.9L298.1 129.8M298.1 129.8L299.4 129.4L304.2 129.4M298.1 129.8L297.5 131.8L297.5 134.3M299.4 129.4L299.8 131.3L299.4 132.7L297.8 134.3M297.5 131.8L299.7 131.4M297.7 134.3L298 136.5L299.8 139.7M299.8 139.7L302.8 141.4M302.8 141.4L304.4 141.5L305.2 144.4L305.8 144.5L309.3 144.6L310.8 144.1L313.5 142.9M302.8 141.4L303.2 143.6L303.4 145.8L302.5 147.3L302.9 147.9M305.2 144.4L305.6 147.2L307.1 149.2L306.9 150.8L306.2 152.3L304.8 151.2L304.9 148.6L302.9 147.9M299.8 139.7L297.1 140.1L296.4 141.1L296.7 145.1L298.4 145.4L298.4 147.1L296.4 145.8L294.7 144.8L292 143.9L290.6 144.1L290.1 143.5M290.1 143.5L290.1 146.5L287.3 146.5L287.3 151L289.3 153M290.1 143.5L287.6 143.9L287 141.5L287 138.4L283.7 138L283.6 139.4L280.9 139.5L279.6 136.4L274.8 136.4L273.4 136.2M272.8 152.6L275.2 152.2L276.2 152.7L282.3 152.7L286.4 153.6L289.3 153L292 153.3M285.9 154L285.9 159.3L284.4 159.3L284.4 163.3M284.4 163.3L284.4 168.4L283 169.1L280.7 168.8L279.5 168.7M284.4 163.3L285.6 166.3L288.3 164.3L292.3 164.6L294.3 162.6L297.8 159.6M297.8 159.6L295.4 157.2L293.3 155.7L292 153.3M292 153.3L294.4 153.5L297 151.5L299.2 150.2M299.2 150.2L299 149L302.9 147.9M299.2 150.2L300.5 150.8L302.8 151.8L302.6 154.3L302.5 157.2L302.1 158.3L300.5 159.9M297.8 159.6L300.5 159.9M300.5 159.9L301.4 162.6L301.5 164.6L301.7 166.1L302.8 166.3M301.4 164.8L299.8 165.7L300.4 166.7L301.7 166.1M294.4 170.1L296.5 168.8L297.8 170L296.5 171.4L295 171.1L294.4 170.1M243.5 68.4L244.3 68.3L246.6 68.4L246.2 69.7L246 71.5L245.5 72L246 73.7L245.5 75.1M253.4 66.3L257 67.1L258.4 67.6L260.6 67.7M266.7 65.7L266 64.7L266 62.9M266 62.9L264.7 62.3L265.8 60.7L266.8 60.3M266.8 60.3L267.7 58.3L265.1 57.6M265.1 57.6L263 57.2L262 56.9L260.3 55.8L259.6 55.3M260.8 54.9L263.1 54.8L264.2 55.8L264.5 55.8M264.5 55.8L264.5 54.3L266 53.6L266.2 52.2M264.5 55.8L264.7 56.7L265.1 57.6M268.4 49.9L270.1 50.1M276.2 51.3L276.8 53.3L277.3 55.5M277.3 55.5L274.5 56.3L273.4 56.5L273.8 57.6L275.6 58.7M275.6 58.7L274.5 60.4L270.9 60.4L269.7 60.4M269.7 60.4L266.8 60.3M266 62.9L268.1 62.3L268.8 62.7L270.8 61.7M269.7 60.4L269.5 61.2L270.8 61.7M270.8 61.7L273.4 61.2L275.5 61.9M275.5 61.9L278.9 61.4M275.5 61.9L275.3 63.1M278.9 61.4L280.3 59.7M275.6 58.7L277.3 58.3L280 58.9L280.3 59.7M277.3 55.5L279.2 56.2L280.2 56.5L282.7 57.6M282.7 57.6L281.5 58.5L280.3 59.7M282.7 57.6L284.4 58L288 58.2M280.3 59.7L282.7 60L285.2 59L287.4 59.2M287.4 59.2L288 58.2L290.1 56L289.6 54.8L289.4 53.3L290 51.3L288.4 50.6L284.2 50.6M290 51.3L292.3 50.9L293.8 48.8M285.9 48.2L291.4 47.8L293.8 48.8M290.6 45.7L293 45.8L295 46.2M293.8 48.8L296.1 48.1L295.5 46.5L295 46.2M295 46.2L295.1 44.2L295.8 43.4M286 49.4L288.4 49.9L288.4 50.6M296.1 48.1L299.9 48.9L299.8 50.1L302.5 51.9L300.5 52.5L301.2 53.9M289.6 54.8L292 54.2L295.5 54.6L299.4 55L301.2 53.9M301.2 53.9L304.9 54.3L306.6 56.3L310 57L313 57.5L312.5 59.9L310.3 61M287.4 59.2L288.6 59.7L291.4 60.2L293.8 59.3L296.1 61.9L296.1 63.3L298.1 63.6M293.8 59.3L297.2 59.7L298.7 62M287.4 59.2L286.6 62.3L284.9 62.4M284.9 62.4L282.7 62.7L279.6 61.9L278.9 61.4M275.3 63.3L277.8 63.3L279.6 61.9M278.5 63.7L280 63.7L283 64.1L283.6 66.1L282.3 67.6M283 64.1L283.2 62.7M278.5 63.7L279 65.1L281 66.8L282.3 67.6M284.9 62.4L286.4 64.3L288.3 64.7M288.3 65.1L290.8 65.8L294.4 65.3L296.7 65.8M288.3 64.7L287.9 67.8M287.9 67.8L288.7 69.3L290.8 69L293.1 69.3L293.5 68.7L295.8 68.3M293.1 69.3L293 70.1M288.7 69.3L285.9 69.8L285.3 71L284.4 71.5M285.9 69.8L285.2 68.6L284.4 67.3L283.6 68.4M287.9 67.8L285.2 68.6M284.4 67.3L283.6 66.1M284.4 67.3L286.6 67.8L287.9 67.8M271.8 44.1L273.1 42L273.5 40.5L273.4 38.4L275.9 36.3L276.6 34.1L279.3 32L281.6 30.6L284.9 29.9M284.9 29.9L289.4 31.6L290.1 34.1L290.4 34.4M284.9 29.9L287.3 30.3L291.6 30.4L293 28.6L295.8 28.4L297.2 29.7M297.2 29.7L299.8 28.7M297.2 29.7L296.5 31L298.7 31.7L297.4 33L298.8 34.6L298.1 35.7L299.4 36.7L298.7 37.4L300.8 38.5L298.2 40.8L295.5 42M245.6 49.8L244.5 50.5L247 51.1M315 69L317.9 69.5L318.2 70.8L319.7 71.5L318.7 72L319.3 73.5L319.7 75.1L316.3 75.2L313.9 75.2L311.2 75.8L308.2 75.7L307.5 76.9M312.9 66.3L316.4 66.6L319.3 67.3L322.1 68.6L325 68.6M317.9 69.5L320 69.3L322.1 68.6M320 69.3L322.1 71.8L321.6 72.7L319.7 71.5M321.6 72.7L324.3 71.5L325.5 73.4M319.7 75.1L321.4 77.1L320.7 79.6L323.8 81.9L324.1 83.9L325.1 85.5M316.3 75.2L314.6 78.5L311.2 80.5M311.2 80.5L311.8 82.2L313.5 82.6L315.7 83.6L319.6 86.5L322.1 86.6L323.4 86.8L324.8 87.5M322.1 86.6L323.8 85.2L324.3 85.3M311.2 80.5L308.3 82.1L306.8 81.5M306.8 81.5L307.1 80.6L308.1 79.4L307.2 78.8M306.8 81.5L306.5 83.2L305.8 86M305.6 86L304.6 83.5M305.8 86L307.3 86.5L309.3 85.3L310 84.6L308.6 83.2L311.8 82.2M316.9 104.7L317.4 103.3L319.1 103.3L322 103.5L323.6 103.7L324.6 102.1L325.8 101.5L330 101M330 101L334.2 99.6L335.2 96.7L334.5 95.7M334.5 95.7L330.8 95.4L329.4 93.7M334.5 95.7L335.4 93.6L336.2 92.6M330 101L331.5 104.2M332.7 75L334.8 73.8L337.4 73.5L340.3 74.7L341.9 75.9L343 75.9L343 77.4M343 77.4L342.2 79.2L342.6 83.2L343.9 83.3L342.6 85.6M342.6 85.6L343.8 87.2L345.3 87.9L345.3 89.3L346 90.2L343.9 90.7L343.6 92.2M342.6 85.6L344.9 86.2L347.2 86.2L350.3 85.5L350.4 84.1L352.4 83.3L354.6 82.6L354.8 81.1L356 80.5L355.6 79.6L357.1 79.5L357.8 77.9L357.3 76.7L359.3 75.7L362.1 75.4M343 77.4L344.6 77.8L345.9 76.9L347.7 76.4L348.2 75.2L350.6 74.8L352.4 75.1L352.9 75.4L354.8 74.5L355.8 74.5L356.1 73.8L357.5 74L357.8 75.8L360.2 74.7L362.5 75.1M350.6 74.8L347.6 72.7L344.9 71.1L342.8 69.4L341.5 69.1L341.3 68L339.3 67.1L338.2 68L337.1 69.3L335.6 69.3L335.6 64L339.2 63.1M335.6 69.3L334.8 69.3L333.8 68.3L332.1 68.1L330.5 68.7M339.2 63.1L342.8 64.9L344.2 66.1L348.4 65.8L350 66.8L349.9 68.3L350.6 68.4L352.7 70L354.1 69.1L356.8 67.8M352.9 75.4L352.4 72.2L353.4 71.7L354.6 70L356.3 69.8L358 70.8L359.8 70L358.1 69L356.8 67.8M354.6 70L356.4 70.8L356.4 71.7L360.7 72M356.8 67.8L360.5 67L361.7 66.6L363.8 67L368.5 67.1L370.1 68M370.1 68L367.6 69L365.4 69.7L363.4 70.3L361 71.3L360.7 72M360.7 72L362.5 73.2L362.5 75.1M326 62.2L324.6 60.2L322.1 59.2L323 58L322.6 57L325.3 57L325.3 56L328.2 54.5L330.8 54.8L333.5 55.5L335.2 56L337.8 55.5L340.8 56.2L343.3 55.8L341.3 54.2L342.9 53.6L342.6 51.6L343.5 51.2L348.6 50.8L353 49.8L354.1 49.2L356.8 49.5L357.3 50.9L360.4 51.3L362 51.6L365.4 50.6L364.8 51.3L366.9 51.9L369.8 55.8L374.6 55.5L377.2 57.5L380.2 58M380.2 58L377.9 59.2L377.7 61L374 60.9L373 63.3L370.3 64L370.9 66.6L370.1 68M380.2 58L383.4 57L387.3 55.8L390.5 56.9L394.4 57.3L395.8 56.2L395.4 54.9L398.1 54.5L401.2 55L401.5 56L403.5 56.7L407.6 56.5L410.3 57.9L413.4 58.2L416.4 57.6L418.6 56.5L422 57.2M380.2 58L381.2 58.9L384.7 60.4L385.4 63.4L389 64L391.7 65.1L393.1 67.3L397.5 67.4L400.8 67.6L403.1 68.4L405.3 68.8L408.9 67.7L411.6 67.6L413 67.1L415.1 65.8L414.9 65L415.3 64L417.6 64.3L418.8 63.4L420.6 63.3L421.8 62.2L423 61.7L426.4 61.7L426.2 60.9L424.5 59.7L423.5 59.7L420.3 59.9L421 58.6L422 57.2M422 57.2L423.7 57.6L425.7 56.7L427.7 53.3L426.7 52.9L428.1 52.2L431.8 51.9L434.6 52.6L437.5 57.2L440.2 57.7L442.3 60.2L445.2 59.6L447.6 59.2L445.3 63.9L443.6 63.6L442.3 64.3L442.7 66.1L441.7 67.7M441.7 67.7L440.5 67.7L438 68.3L436.5 68.6L434.2 70.1L432.9 71M436.2 74.2L438.6 73.1M409.6 97.4L407.8 96.7L405.8 94.9L403.8 96L401.4 96.1M401.4 96.1L400.8 97.8L399.9 97.4M399.9 97.4L398.1 96.7L397.1 95.1L396.7 93.7L394.8 93.9L396.4 91.2L396.4 88.7L394.5 87.9M394.5 87.9L394 89.5L391.4 91L390.5 92.9L388.7 93.9L388.8 96.7L387.7 96.9L387.3 98.6M387.3 98.6L387.3 94.3L385.7 94.6L387.4 92.4L383.7 92L383.7 90.7L381.7 90.3L381.3 93.2L382.3 93.6L382.6 96.7M394.5 87.9L392.8 86.2L390.5 86.3L387 88.5L386.4 88.5M386.4 88.5L384 87.8L382.4 89.2L383.7 90L387 89.7L386.4 88.5M381.3 88.3L378.3 88.2L375.5 87L372.6 84.9L370.1 84.5L369.9 87L374.5 89L378 90.2L381.4 90.5L381.3 88.3M381.3 88.3L382.4 89.2M370.1 84.5L367.9 83.2L368.2 80.6L366.9 77.5L366.6 77.5M366.6 77.5L361.7 78.5L361.2 81.1L363.2 82.1L361.8 83.9L359.8 86.5L358.3 88.3L356.1 88.2L355 89.3L355.8 91.4L357 93.3L353.7 93.4L353 94.4M362.5 75.1L364.1 76.8L366.6 77.5M399.9 97.4L398.4 99L396.8 99.6L395.1 101.7L396.2 105.1L395.7 106.7L397.1 109.5L397.7 111.2L396.5 113.2L396.2 113.8M398.4 99L399.1 100.3L400.1 100.3L399.9 103.1L401.2 102.1L402.9 101.8L404.9 103.1L405 104.7L406.2 105.8L405.6 107.7M401.4 96.1L402.5 98.4L404.8 98.7L403.8 100.6L405.6 101.5L407.6 104.5L408.9 106.5L408.9 107.1M405.6 107.7L408.9 107.1L409 110.5L406.6 111.5L407 112.4L404.5 113.2M405.6 107.7L402.5 107.8L401.5 108.7L402.3 111.4M398.4 118.9L399.8 119.9L401.2 119.2M411.9 125.2L413.3 126.7L415.4 126L417.7 126.2L419.4 124.7L419.7 123.7L420.4 122L423.3 122M456.5 131.7L456.5 140.9"/>
<circle cx="335.5" cy="69.5" r="6" fill="#f3b95e" fill-opacity="0.8" stroke="#ea9e28" stroke-width="1.2"/>
</svg>

<!-- editing toolbar -->
<div class="olbtn" style="left:496px">
  <svg class="abs" style="left:2px;top:2px" width="19" height="17" viewBox="0 0 19 17"><path d="M5 2.4 L17.2 5.9 L14.6 13.8 L1.2 10.3 Z" fill="#f7e3a8" stroke="#b8a878" stroke-width="0.8"/><g fill="#000"><rect x="4" y="1.4" width="2" height="2"/><rect x="16.2" y="4.9" width="2" height="2"/><rect x="13.6" y="12.8" width="2" height="2"/><rect x="0.2" y="9.3" width="2" height="2"/></g></svg>
</div>
<div class="olbtn" style="left:525px">
  <svg class="abs" style="left:2px;top:2px" width="19" height="17" viewBox="0 0 19 17"><path d="M1.5 9.8 L6.2 1.7 L16.9 6.2 L14.7 13.8" fill="none" stroke="#606060" stroke-width="0.8"/><g fill="#000"><rect x="5.2" y="0.7" width="2" height="2"/><rect x="15.9" y="5.2" width="2" height="2"/><rect x="13.7" y="12.8" width="2" height="2"/><rect x="0.5" y="8.8" width="2" height="2"/></g></svg>
</div>
<div class="olbtn" style="left:554px;background:#f3bb3b;border-color:#d9a428">
  <svg class="abs" style="left:2px;top:2px" width="19" height="17" viewBox="0 0 19 17"><path d="M2.5 14.5 L4 10.5 L12.5 2 L15 4.5 L6.5 13 Z" fill="#fff" stroke="#303030" stroke-width="1" stroke-linejoin="round"/><path d="M2.5 14.5 L4 10.5 L6.5 13Z" fill="#303030"/><path d="M15 11V15.8M12.6 13.4H17.4" stroke="#000" stroke-width="1.2"/></svg>
</div>
<div class="olbtn" style="left:583px">
  <svg class="abs" style="left:0;top:0" width="22" height="20" viewBox="0 0 22 20"><path d="M8.3 17.2 L5.6 14 L2.3 10.4 C1.6 9.2 3 8 4.2 8.8 L6.9 11.4 L5.3 4.4 C5 2.8 7.3 2.2 7.8 3.8 L9.3 9 L9.5 2.7 C9.5 1.1 11.9 1.1 12 2.7 L12 9 L13.9 3.6 C14.4 2.1 16.6 2.8 16.2 4.3 L14.8 9.8 L16.8 6.6 C17.6 5.4 19.5 6.3 18.9 7.7 L17.2 13 L15.8 17.3 Z" fill="#fdfdfb" stroke="#1c1c1c" stroke-width="1.05" stroke-linejoin="round"/></svg>
</div>
<!-- layer switcher -->
<div class="abs" style="left:594px;top:170px;width:18px;height:18px;background:#00008b;border-radius:9px 0 0 9px;"></div>
<svg class="abs" style="left:598.4px;top:173.2px" width="12" height="12" viewBox="0 0 12 12"><path d="M6 1V11M1 6H11" stroke="#fff" stroke-width="2.8"/></svg>

<!-- ===== firebug toolbar ===== -->
<div class="abs" id="fbtool"></div>
<svg class="abs" style="left:11px;top:455px" width="24" height="19" viewBox="0 0 24 19">
  <path d="M2 6.2 L7.6 8.6 M1.4 10.6 L6 10.2 M6 18 L8.6 13 M13.4 16.4 L12.4 13 M19.6 12.2 L16.6 10.6 M10 1.4 L11.4 4.6 M17.6 1.6 L16.4 4.4" stroke="#7a7468" stroke-width="0.8" fill="none"/>
  <ellipse cx="12.5" cy="7.8" rx="7.9" ry="4.9" fill="#e9a636" transform="rotate(-22 12.5 7.8)"/>
  <ellipse cx="14.6" cy="5.6" rx="4.4" ry="2" fill="#f8dc92" transform="rotate(-22 14.6 5.6)"/>
  <ellipse cx="6.9" cy="10.6" rx="2.6" ry="2.1" fill="#4e2c0c" transform="rotate(-22 6.9 10.6)"/>
  <path d="M9.6 6.2 L11.6 10.8 M12.6 5 L14.4 9.6 M15.8 4 L17.2 7.8" stroke="#9a5a16" stroke-width="1.1" fill="none"/>
  <ellipse cx="13" cy="10.6" rx="4.6" ry="1.3" fill="#d48a22" transform="rotate(-22 13 10.6)"/>
</svg>
<svg class="abs" style="left:40px;top:456px" width="18" height="18" viewBox="0 0 18 18"><rect x="1.2" y="1.8" width="15" height="6.4" fill="#f4f6fb" stroke="#5674b4" stroke-width="1.3"/><path d="M7 2.8 L7 13 L9.4 10.8 L11.6 15.2 L13.6 14.2 L11.5 10 L14.6 9.7 Z" fill="#74a0ec" stroke="#3d62b0" stroke-width="0.8" stroke-linejoin="round"/></svg>
<div class="abs" style="left:62px;top:452px;width:1px;height:23px;background:#8c8a84"></div><div class="abs" style="left:63px;top:452px;width:1px;height:23px;background:#f8f8f6"></div>
<svg class="abs" style="left:72px;top:457px" width="11" height="15" viewBox="0 0 11 15"><path d="M8.7 1.3 L2.7 7.5 L8.7 13.7" fill="none" stroke="#1a4fc8" stroke-width="3.6" stroke-linejoin="miter"/></svg>
<svg class="abs" style="left:97px;top:457px" width="11" height="15" viewBox="0 0 11 15"><path d="M2.5 1.5 L8.5 7.5 L2.5 13.5" fill="none" stroke="#a2a2a2" stroke-width="3"/><path d="M2.5 1.5 L8.5 7.5 L2.5 13.5" fill="none" stroke="#efefef" stroke-width="1.2"/></svg>
<div class="abs" style="left:116px;top:452px;width:1px;height:23px;background:#8c8a84"></div><div class="abs" style="left:117px;top:452px;width:1px;height:23px;background:#f8f8f6"></div>
<div class="abs" style="left:124px;top:460px;width:14px;height:1px;background:#bcbab4;box-shadow:0 3px 0 #bcbab4,0 6px 0 #bcbab4,0 9px 0 #bcbab4"></div>
<div class="abs" style="left:148px;top:451px;width:17px;height:30px;box-sizing:border-box;border:1px solid #8c8a84;border-bottom:none;border-radius:3px 3px 0 0;background:linear-gradient(#e4e2dc,#c6c3ba)"></div>
<svg class="abs" style="left:154px;top:464px" width="5" height="3" viewBox="0 0 5 3"><path d="M0 0H5L2.5 3Z" fill="#000"/></svg>
<div class="abs" style="left:167px;top:460px;width:76px;height:21px;box-sizing:border-box;border:1px solid #c4c2bc;border-bottom:none;border-radius:5px 5px 0 0;background:linear-gradient(#fdfdfc,#e6e4de)"></div>
<span class="t jp" style="left:173.3px;top:461.5px;font-weight:bold;font-size:11px;letter-spacing:-1.70px;">コンソール</span>
<svg class="abs" style="left:225px;top:468px" width="8" height="4" viewBox="0 0 8 4"><path d="M0 0H8L4 4Z" fill="#000"/></svg>
<span class="t fbtab" style="left:250.3px;top:461.5px;letter-spacing:0.11px;">HTML</span>
<span class="t fbtab" style="left:297.3px;top:461.5px;letter-spacing:0.29px;">CSS</span>
<span class="t fbtab jp" style="left:337px;top:461.5px;font-weight:bold;color:#4a4a4a;letter-spacing:-2.40px;">スクリプト</span>
<span class="t fbtab" style="left:396px;top:461.5px;letter-spacing:0.44px;">DOM</span>
<span class="t fbtab jp" style="left:438px;top:461.5px;font-weight:bold;color:#4a4a4a;letter-spacing:-2.33px;">ネット</span>
<span class="t fbtab" style="left:480.5px;top:461.5px;color:#9a9a9a;letter-spacing:0.14px;">Cookie</span>
<div class="field" style="left:584px;top:453px;width:130px;height:22px;border-radius:6px;border-color:#a8a59c"></div>
<svg class="abs" style="left:589px;top:456px" width="15" height="15" viewBox="0 0 15 15"><circle cx="9" cy="5.4" r="3.6" fill="#fff" stroke="#3b6ea5" stroke-width="1.9"/><path d="M6.4 8.2 L2 12.8" stroke="#3b6ea5" stroke-width="2.3" stroke-linecap="round"/></svg>
<div class="rbtn" style="left:721px"><div class="abs" style="left:3px;top:6px;width:6px;height:2px;background:#fff"></div></div>
<div class="rbtn" style="left:737px"><div class="abs" style="left:4px;top:2px;width:6px;height:6px;box-sizing:border-box;border:1px solid #fff"></div><div class="abs" style="left:2px;top:4px;width:6px;height:6px;box-sizing:border-box;border:1px solid #fff;background:#dc5a5a"></div></div>
<div class="rbtn" style="left:753px"><svg class="abs" style="left:1px;top:1px" width="10" height="10" viewBox="0 0 10 10"><path d="M3 2.4 A3.5 3.5 0 1 0 7 2.4" fill="none" stroke="#fff" stroke-width="1.3"/><path d="M5 0.6V5" stroke="#fff" stroke-width="1.3"/></svg></div>

<!-- ===== firebug console (left) ===== -->
<div class="abs" id="fbsub"></div>
<svg class="abs" style="left:14px;top:486px" width="16" height="18" viewBox="0 0 16 18"><rect x="1" y="2" width="3.4" height="13" rx="1" fill="#e9b45a" stroke="#c98a2a" stroke-width="0.8"/><rect x="7" y="2" width="3.4" height="8" rx="1" fill="#e9b45a" stroke="#c98a2a" stroke-width="0.8"/><circle cx="10.5" cy="12.5" r="4" fill="#fbe4e4" stroke="#e03a3a" stroke-width="1.5"/><path d="M7.8 15.2 L13.2 9.8" stroke="#e03a3a" stroke-width="1.5"/></svg>
<div class="abs" style="left:36px;top:486px;width:1px;height:18px;background:#8c8a84"></div>
<span class="t jp" style="left:51.5px;top:488px;font-size:13px;letter-spacing:-3.83px;">クリア</span>
<span class="t jp" style="left:97.5px;top:488px;font-size:13px;letter-spacing:0.00px;">持続</span>
<span class="t jp" style="left:141.5px;top:488px;font-size:13px;letter-spacing:-3.42px;">プロファイル</span>
<div class="abs" style="left:208px;top:486px;width:1px;height:18px;background:#8c8a84"></div>
<span class="t jp" style="left:223.5px;top:488px;font-size:13px;letter-spacing:-2.67px;">すべて</span>
<div class="abs" style="left:263px;top:484px;width:33px;height:22px;box-sizing:border-box;border:1px solid #8c8a84;border-right:none;background:#eeece7;border-radius:3px 0 0 3px"></div>
<span class="abs" style="left:274.5px;top:488px;width:21.5px;height:14px;overflow:hidden"><span class="t jp" style="left:0;top:0;font-size:13px;letter-spacing:-3.00px;">エラー</span></span>
<div class="abs" id="fblog">
  <div class="abs" style="left:0;top:16px;width:292px;height:1px;background:#d7d7d7"></div>
  <div class="abs" style="left:0;top:64px;width:292px;height:1px;background:#d7d7d7"></div>
  <div class="abs" style="left:0;top:111px;width:292px;height:1px;background:#d7d7d7"></div>
  <span class="t log" style="left:5.7px;top:1.5px;font-weight:normal;letter-spacing:-0.20px;">function()</span>
  <span class="t log" style="left:5.7px;top:19.5px;letter-spacing:-0.06px;">Object {</span>
  <span class="t log" style="left:61.7px;top:19.5px;letter-spacing:-0.76px;">layer={<span style="letter-spacing:-3.4px">...</span>},</span>
  <span class="t log" style="left:131.3px;top:19.5px;letter-spacing:-0.61px;">data={<span style="letter-spacing:-3.4px">...</span>},</span>
  <span class="t log" style="left:5.7px;top:34.0px"><span style="letter-spacing:-0.01px;">id=</span><span class="red" style="letter-spacing:0.95px;">"OpenLayers.Feature.Vector_79"</span>,</span>
  <span class="t jp" style="left:249.2px;top:33.5px;color:#303030;font-weight:bold;font-size:12px;letter-spacing:-1.67px;">もっと</span>
  <span class="t jp" style="left:5.7px;top:48.5px;color:#303030;font-weight:bold;font-size:12px;letter-spacing:-0.16px;">見る<span style="letter-spacing:-0.9px;font-weight:normal">...</span></span>
  <span class="t log" style="left:41.6px;top:48.5px">}</span>
  <span class="t log" style="left:5.7px;top:67px;letter-spacing:-0.06px;">Object {</span>
  <span class="t log" style="left:61.7px;top:67px;letter-spacing:-0.76px;">layer={<span style="letter-spacing:-3.4px">...</span>},</span>
  <span class="t log" style="left:131.3px;top:67px;letter-spacing:-0.61px;">data={<span style="letter-spacing:-3.4px">...</span>},</span>
  <span class="t log" style="left:5.7px;top:81.5px"><span style="letter-spacing:-0.01px;">id=</span><span class="red" style="letter-spacing:0.95px;">"OpenLayers.Feature.Vector_79"</span>,</span>
  <span class="t jp" style="left:249.2px;top:81px;color:#303030;font-weight:bold;font-size:12px;letter-spacing:-1.67px;">もっと</span>
  <span class="t jp" style="left:5.7px;top:96px;color:#303030;font-weight:bold;font-size:12px;letter-spacing:-0.16px;">見る<span style="letter-spacing:-0.9px;font-weight:normal">...</span></span>
  <span class="t log" style="left:41.6px;top:96px">}</span>
</div>
<div class="abs" id="split"></div>

<!-- ===== firebug command editor (right) ===== -->
<div class="abs" id="cmd">
  <div class="abs" style="left:4px;top:20px;width:464px;height:18.5px;background:#e2eefa"></div>
  <span class="t mono" style="left:3.6px;top:1.5px;font-size:17px;letter-spacing:-0.5px;line-height:18px;color:#000">map.layers[1].getFeatureById</span>
  <span class="t mono" style="left:3.6px;top:20.5px;font-size:17px;letter-spacing:-0.5px;line-height:18px;color:#000">(<span style="color:#c41a16">'OpenLayers.Feature.Vector_79'</span>);</span>
  <div class="abs" style="left:251.5px;top:22px;width:1px;height:15px;background:#000"></div>
</div>
<div class="abs" id="cmdbar">
  <span class="t jp" style="left:11.5px;top:3.5px;font-size:13px;letter-spacing:-0.25px;">実行</span>
  <span class="t jp" style="left:56.5px;top:3.5px;font-size:13px;letter-spacing:-3.83px;">クリア</span>
  <span class="t jp" style="left:101.5px;top:3.5px;font-size:13px;letter-spacing:-2.83px;">コピー</span>
  <span class="t jp" style="left:149px;top:3.5px;font-size:13px;letter-spacing:-0.25px;">履歴</span>
  <div class="abs" style="left:454px;top:4px;width:14px;height:13px;box-sizing:border-box;border:1px solid #b84a4a;border-radius:3px;background:linear-gradient(#f3a6a6 0%,#e16c6c 45%,#d34e4e 55%,#da5e5e 100%)"></div>
  <svg class="abs" style="left:457px;top:8px" width="8" height="6" viewBox="0 0 8 6"><path d="M0.5 0.5H7.5L4 5Z" fill="none" stroke="#fff" stroke-width="1.1"/></svg>
</div>

<!-- ===== add-on bar ===== -->
<div class="abs" id="addon">
  <svg class="abs" style="left:9px;top:7px" width="9" height="7" viewBox="0 0 9 7"><path d="M1 0.8L8 6.2M8 0.8L1 6.2" stroke="#444" stroke-width="1.7" fill="none"/></svg>
</div>
</body>
</html>
